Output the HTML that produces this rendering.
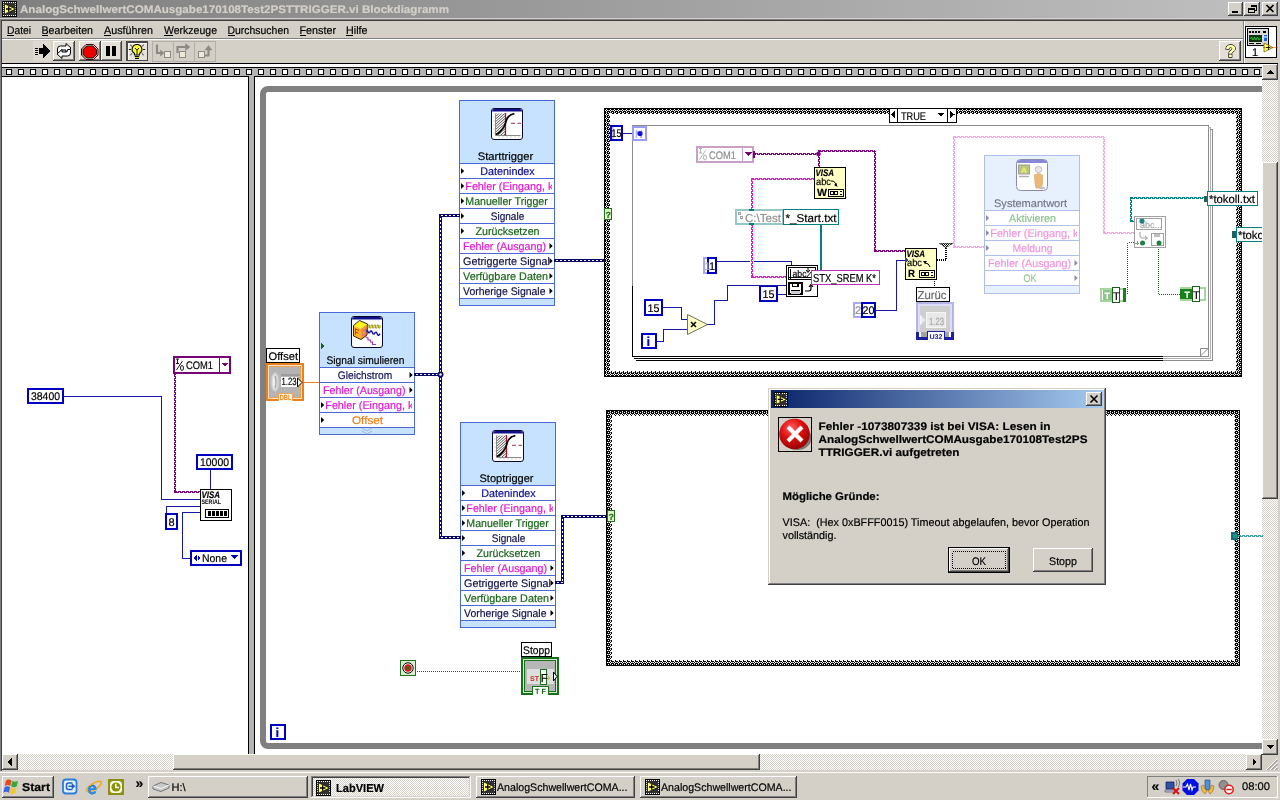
<!DOCTYPE html>
<html><head><meta charset="utf-8"><title>LabVIEW</title>
<style>html,body{margin:0;padding:0;background:#d4d0c8;overflow:hidden}
svg{display:block;will-change:transform;font-family:"Liberation Sans",sans-serif;font-size:11px}
svg text{white-space:pre}
</style></head><body>
<svg width="1280" height="800" viewBox="0 0 1280 800" shape-rendering="crispEdges" text-rendering="geometricPrecision">
<defs><linearGradient id="tg" x1="0" x2="1" y1="0" y2="0"><stop offset="0" stop-color="#7f7f7f"/><stop offset="1" stop-color="#c0c0c0"/></linearGradient><linearGradient id="dg" x1="0" x2="1" y1="0" y2="0"><stop offset="0" stop-color="#0a246a"/><stop offset="1" stop-color="#a6caf0"/></linearGradient><pattern id="dith" width="2" height="2" patternUnits="userSpaceOnUse"><rect width="2" height="2" fill="#fff"/><rect width="1" height="1" fill="#d4d0c8"/><rect x="1" y="1" width="1" height="1" fill="#d4d0c8"/></pattern><pattern id="chk" width="2" height="2" patternUnits="userSpaceOnUse"><rect width="2" height="2" fill="#fff"/><rect width="1" height="1" fill="#000"/><rect x="1" y="1" width="1" height="1" fill="#000"/></pattern><pattern id="rul" x="0" y="69" width="12" height="6" patternUnits="userSpaceOnUse"><rect x="6" y="0" width="6" height="6" fill="#000"/><rect x="7" y="1" width="4" height="4" fill="#fff"/></pattern><pattern id="ring" width="4" height="4" patternUnits="userSpaceOnUse"><rect width="4" height="4" fill="#000"/><rect x="2" y="1" width="1" height="1" fill="#fff"/><rect x="1" y="2" width="1" height="1" fill="#fff"/><rect x="3" y="2" width="1" height="1" fill="#fff"/><rect x="2" y="3" width="1" height="1" fill="#fff"/><rect x="0" y="0" width="1" height="1" fill="#fff"/><rect x="0" y="2" width="1" height="1" fill="#fff" opacity="0.5"/><rect x="2" y="0" width="1" height="1" fill="#fff" opacity="0.5"/></pattern></defs>
<rect x="0" y="0" width="1280" height="800" fill="#d4d0c8" />
<rect x="0" y="0" width="1280" height="18" fill="url(#tg)" />
<g transform="translate(2,1) scale(1)">
<rect x="0" y="0" width="15" height="16" fill="#000" />
<rect x="1" y="1" width="13" height="14" fill="#303030" />
<rect x="1" y="1" width="1" height="1" fill="#fff" />
<rect x="1" y="14" width="1" height="1" fill="#fff" />
<rect x="3" y="1" width="1" height="1" fill="#fff" />
<rect x="3" y="14" width="1" height="1" fill="#fff" />
<rect x="5" y="1" width="1" height="1" fill="#fff" />
<rect x="5" y="14" width="1" height="1" fill="#fff" />
<rect x="7" y="1" width="1" height="1" fill="#fff" />
<rect x="7" y="14" width="1" height="1" fill="#fff" />
<rect x="9" y="1" width="1" height="1" fill="#fff" />
<rect x="9" y="14" width="1" height="1" fill="#fff" />
<rect x="11" y="1" width="1" height="1" fill="#fff" />
<rect x="11" y="14" width="1" height="1" fill="#fff" />
<rect x="13" y="1" width="1" height="1" fill="#fff" />
<rect x="13" y="14" width="1" height="1" fill="#fff" />
<rect x="1" y="3" width="1" height="1" fill="#d8d8ff" />
<rect x="13" y="3" width="1" height="1" fill="#d8d8ff" />
<rect x="1" y="5" width="1" height="1" fill="#d8d8ff" />
<rect x="13" y="5" width="1" height="1" fill="#d8d8ff" />
<rect x="1" y="7" width="1" height="1" fill="#d8d8ff" />
<rect x="13" y="7" width="1" height="1" fill="#d8d8ff" />
<rect x="1" y="9" width="1" height="1" fill="#d8d8ff" />
<rect x="13" y="9" width="1" height="1" fill="#d8d8ff" />
<rect x="1" y="11" width="1" height="1" fill="#d8d8ff" />
<rect x="13" y="11" width="1" height="1" fill="#d8d8ff" />
<path d="M2.5 2.8 L13.6 8 L2.5 13.200z" fill="#ffff70" stroke="#000" stroke-width="0.7" shape-rendering="geometricPrecision"/>
<path d="M4 8h5.500M6.700 5.300v5.400" fill="none" stroke="#000" stroke-width="1.3" shape-rendering="geometricPrecision"/>
</g>
<text x="20" y="13" fill="#d4d0c8" font-size="11" font-weight="bold" textLength="429" lengthAdjust="spacingAndGlyphs" stroke="#d4d0c8" stroke-width="0.18" >AnalogSchwellwertCOMAusgabe170108Test2PSTTRIGGER.vi Blockdiagramm</text>
<rect x="1228" y="2" width="15" height="14" fill="#404040" />
<rect x="1228" y="2" width="14" height="13" fill="#fff" />
<rect x="1229" y="3" width="13" height="12" fill="#808080" />
<rect x="1229" y="3" width="12" height="11" fill="#d4d0c8" />
<rect x="1244" y="2" width="16" height="14" fill="#404040" />
<rect x="1244" y="2" width="15" height="13" fill="#fff" />
<rect x="1245" y="3" width="14" height="12" fill="#808080" />
<rect x="1245" y="3" width="13" height="11" fill="#d4d0c8" />
<rect x="1262" y="2" width="16" height="14" fill="#404040" />
<rect x="1262" y="2" width="15" height="13" fill="#fff" />
<rect x="1263" y="3" width="14" height="12" fill="#808080" />
<rect x="1263" y="3" width="13" height="11" fill="#d4d0c8" />
<rect x="1232" y="11" width="6" height="2" fill="#000" />
<path d="M1250.5 5.5h6v5h-2 M1250.5 6.5h6" fill="none" stroke="#000" stroke-width="1" />
<path d="M1248.5 8.5h6v4h-6z M1248.5 9.5h6" fill="none" stroke="#000" stroke-width="1" />
<path d="M1266.5 5 l7 7 M1273.5 5 l-7 7" fill="none" stroke="#000" stroke-width="1.6" shape-rendering="geometricPrecision"/>
<rect x="0" y="19" width="1280" height="1" fill="#808080" />
<rect x="0" y="20" width="1280" height="1" fill="#404040" />
<rect x="0" y="19" width="1" height="752" fill="#808080" />
<rect x="1" y="20" width="1" height="751" fill="#404040" />
<text x="7" y="34" fill="#000" font-size="11" textLength="24" lengthAdjust="spacingAndGlyphs" stroke="#000" stroke-width="0.18" >Datei</text>
<rect x="7" y="35" width="7" height="1" fill="#000" />
<text x="41.5" y="34" fill="#000" font-size="11" textLength="51.5" lengthAdjust="spacingAndGlyphs" stroke="#000" stroke-width="0.18" >Bearbeiten</text>
<rect x="42" y="35" width="6" height="1" fill="#000" />
<text x="104" y="34" fill="#000" font-size="11" textLength="49" lengthAdjust="spacingAndGlyphs" stroke="#000" stroke-width="0.18" >Ausführen</text>
<rect x="104" y="35" width="7" height="1" fill="#000" />
<text x="164" y="34" fill="#000" font-size="11" textLength="53" lengthAdjust="spacingAndGlyphs" stroke="#000" stroke-width="0.18" >Werkzeuge</text>
<rect x="164" y="35" width="9" height="1" fill="#000" />
<text x="227.5" y="34" fill="#000" font-size="11" textLength="61.5" lengthAdjust="spacingAndGlyphs" stroke="#000" stroke-width="0.18" >Durchsuchen</text>
<rect x="228" y="35" width="7" height="1" fill="#000" />
<text x="299.5" y="34" fill="#000" font-size="11" textLength="36.5" lengthAdjust="spacingAndGlyphs" stroke="#000" stroke-width="0.18" >Fenster</text>
<rect x="300" y="35" width="6" height="1" fill="#000" />
<text x="346" y="34" fill="#000" font-size="11" textLength="21.5" lengthAdjust="spacingAndGlyphs" stroke="#000" stroke-width="0.18" >Hilfe</text>
<rect x="346" y="35" width="7" height="1" fill="#000" />
<rect x="2" y="38" width="1241" height="1" fill="#808080" />
<rect x="2" y="39" width="1241" height="1" fill="#fff" />
<rect x="1243" y="21" width="1" height="42" fill="#808080" />
<rect x="1244" y="21" width="1" height="42" fill="#fff" />
<rect x="33" y="41" width="18" height="20" fill="#dedad2" />
<path d="M43 44 l7 7 l-7 7 v-4 h-4 v-6 h4z" fill="#000" />
<rect x="35" y="48" width="3" height="1" fill="#000" />
<rect x="35" y="50" width="3" height="1" fill="#000" />
<rect x="35" y="52" width="3" height="1" fill="#000" />
<rect x="35" y="54" width="3" height="1" fill="#000" />
<rect x="53" y="41" width="22" height="20" fill="#404040" />
<rect x="53" y="41" width="21" height="19" fill="#fff" />
<rect x="54" y="42" width="20" height="18" fill="#808080" />
<rect x="54" y="42" width="19" height="17" fill="#e4e0d8" />
<path d="M57.5 52.5 v-3.5 q0 -3 3 -3 h5.500 v-2.500 l5 4.5 l-5 4.5 v-2.500 h-4 q-1.500 0 -1.500 1.500 v1z" fill="#fff" stroke="#000" stroke-width="1" shape-rendering="geometricPrecision"/>
<path d="M70.5 49.5 v3.5 q0 3 -3 3 h-5.500 v2.500 l-5 -4.5 l5 -4.5 v2.500 h4 q1.500 0 1.500 -1.500 v-1z" fill="#fff" stroke="#000" stroke-width="1" shape-rendering="geometricPrecision"/>
<rect x="79" y="41" width="22" height="20" fill="#404040" />
<rect x="79" y="41" width="21" height="19" fill="#fff" />
<rect x="80" y="42" width="20" height="18" fill="#808080" />
<rect x="80" y="42" width="19" height="17" fill="#e4e0d8" />
<path d="M86 44.5 h7.5 l4.5 4.5 v6 l-4.5 4.5 h-7.5 l-4.5 -4.5 v-6 z" fill="#d4d0c8" stroke="#400000" stroke-width="1" shape-rendering="geometricPrecision"/>
<path d="M86.6 46 h6.3 l3.6 3.6 v4.8 l-3.6 3.6 h-6.3 l-3.6 -3.6 v-4.8 z" fill="#ee0000" stroke="#000" stroke-width="0.8" shape-rendering="geometricPrecision"/>
<rect x="101" y="41" width="21" height="20" fill="#404040" />
<rect x="101" y="41" width="20" height="19" fill="#fff" />
<rect x="102" y="42" width="19" height="18" fill="#808080" />
<rect x="102" y="42" width="18" height="17" fill="#e4e0d8" />
<rect x="106" y="46" width="4" height="10" fill="#000" />
<rect x="112" y="46" width="4" height="10" fill="#000" />
<rect x="126" y="41" width="22" height="20" fill="#484848" />
<rect x="128" y="43" width="19" height="17" fill="#fff" />
<rect x="129" y="44" width="18" height="16" fill="#e6e3dc" />
<g shape-rendering="geometricPrecision">
<path d="M137 44.5 a4.8 4.8 0 0 1 2.700 8.800 l-.3 1.700 h-4.800 l-.3 -1.700 a4.800 4.800 0 0 1 2.700 -8.800z" fill="#ffff30" stroke="#000" stroke-width="1.1" />
<path d="M135 48 l2 2.200 l2 -2.200 M137 50.200 v4.500" fill="none" stroke="#000" stroke-width="0.9" />
<path d="M134.8 56.5 h4.400 M135 58.300 h4" fill="none" stroke="#000" stroke-width="1.2" />
<path d="M135.2 57.4 h3.600" fill="none" stroke="#e8e000" stroke-width="0.8" />
<path d="M130.2 44.8 l1.800 1.600 M143.800 44.800 l-1.800 1.600 M128.800 49.500 h2.200 M143 49.500 h2.200 M130.300 55 l1.800 -1.500 M143.700 55 l-1.800 -1.500" fill="none" stroke="#202020" stroke-width="1" />
</g>
<rect x="152" y="41" width="64" height="21" fill="#b4b0a8" />
<rect x="153" y="42" width="20" height="19" fill="#d3cfc7" />
<rect x="174" y="42" width="20" height="19" fill="#d3cfc7" />
<rect x="195" y="42" width="20" height="19" fill="#d3cfc7" />
<g shape-rendering="geometricPrecision" fill="none" stroke="#8c8a82" stroke-width="2.2">
<path d="M157 44.5 v8.500 h4.500" fill="none" />
<path d="M160.5 50 l3.500 3 l-3.500 3z" fill="#8c8a82" stroke="#8c8a82" stroke-width="0.5" />
<path d="M177.5 53 v-6 h9" fill="none" />
<path d="M185.500 43.500 l4.500 3.500 l-4.500 3.500z" fill="#8c8a82" stroke="#8c8a82" stroke-width="0.5" />
<path d="M204 55.5 h4.500 v-6" fill="none" />
<path d="M205 50 l3.500 -4.500 l3.500 4.500z" fill="#8c8a82" stroke="#8c8a82" stroke-width="0.5" />
</g>
<rect x="164" y="51" width="7" height="7" fill="#8c8a82" />
<rect x="165" y="52" width="5" height="5" fill="#ecead8" />
<rect x="179" y="51" width="7" height="7" fill="#8c8a82" />
<rect x="180" y="52" width="5" height="5" fill="#ecead8" />
<rect x="198" y="51" width="7" height="7" fill="#8c8a82" />
<rect x="199" y="52" width="5" height="5" fill="#ecead8" />
<rect x="1219" y="41" width="22" height="20" fill="#404040" />
<rect x="1219" y="41" width="21" height="19" fill="#fff" />
<rect x="1220" y="42" width="20" height="18" fill="#808080" />
<rect x="1220" y="42" width="19" height="17" fill="#e4e0d8" />
<text x="1225.5" y="57" fill="#fff" font-size="17" font-weight="bold" stroke="#000" stroke-width="1.6" paint-order="stroke" shape-rendering="geometricPrecision">?</text>
<text x="1225.5" y="57" fill="#ffffa0" font-size="17" font-weight="bold" stroke="#ffffa0" stroke-width="0.18" >?</text>
<rect x="1245" y="26" width="32" height="32" fill="#000" />
<rect x="1246" y="27" width="30" height="30" fill="#fff" />
<rect x="1247" y="28" width="22" height="18" fill="#000" />
<rect x="1248" y="29" width="20" height="16" fill="#d8d8d8" />
<rect x="1249" y="35" width="13" height="7" fill="#103010" />
<path d="M1250 39 l1.5 -2 l1.5 3 l1.5 -3 l1.5 3 l1.5 -3 l1.5 3 l1.5 -2" fill="none" stroke="#30e030" stroke-width="0.8" shape-rendering="geometricPrecision"/>
<rect x="1249" y="31" width="2" height="2" fill="#000" />
<rect x="1252" y="31" width="2" height="2" fill="#000" />
<rect x="1255" y="31" width="2" height="2" fill="#000" />
<rect x="1258" y="31" width="2" height="2" fill="#000" />
<rect x="1263" y="31" width="3" height="2" fill="#000" />
<rect x="1264" y="35" width="3" height="6" fill="#2060e0" />
<rect x="1264" y="36" width="3" height="2" fill="#80c0ff" />
<rect x="1249" y="43" width="5" height="1" fill="#000" />
<rect x="1256" y="43" width="5" height="1" fill="#000" />
<text x="1252" y="55.5" fill="#000" font-size="11" stroke="#000" stroke-width="0.18" >1</text>
<path d="M1264 43 l9 4.5 l-9 4.5z" fill="#ffff50" stroke="#806000" stroke-width="0.8" shape-rendering="geometricPrecision"/>
<rect x="1263" y="47" width="15" height="1" fill="#c04000" opacity="0.5"/>
<path d="M1266 47.5h4M1268 45.5v4" fill="none" stroke="#000" stroke-width="0.8" />
<rect x="2" y="63" width="1276" height="1" fill="#000" />
<rect x="2" y="64" width="1260" height="3" fill="#fff" />
<rect x="2" y="67" width="1260" height="1" fill="#000" />
<rect x="2" y="68" width="1260" height="8" fill="#b4b4b4" />
<rect x="2" y="69" width="1260" height="6" fill="url(#rul)" />
<rect x="2" y="76" width="1260" height="1" fill="#000" />
<rect x="2" y="77" width="246" height="677" fill="#fff" />
<rect x="248" y="77" width="1" height="677" fill="#000" />
<rect x="249" y="76" width="5" height="678" fill="#b4b4b4" />
<rect x="254" y="77" width="1" height="677" fill="#000" />
<rect x="255" y="77" width="1007" height="677" fill="#fff" />
<rect x="1262" y="64" width="16" height="691" fill="url(#dith)" />
<rect x="1278" y="64" width="2" height="707" fill="#d4d0c8" />
<rect x="1262" y="64" width="16" height="16" fill="#404040" />
<rect x="1262" y="64" width="15" height="15" fill="#fff" />
<rect x="1263" y="65" width="14" height="14" fill="#808080" />
<rect x="1263" y="65" width="13" height="13" fill="#d4d0c8" />
<path d="M1266 74 h8 l-4 -4z" fill="#000" />
<rect x="1262" y="162" width="16" height="337" fill="#404040" />
<rect x="1262" y="162" width="15" height="336" fill="#fff" />
<rect x="1263" y="163" width="14" height="335" fill="#808080" />
<rect x="1263" y="163" width="13" height="334" fill="#d4d0c8" />
<rect x="1262" y="739" width="16" height="16" fill="#404040" />
<rect x="1262" y="739" width="15" height="15" fill="#fff" />
<rect x="1263" y="740" width="14" height="14" fill="#808080" />
<rect x="1263" y="740" width="13" height="13" fill="#d4d0c8" />
<path d="M1266 745 h8 l-4 4z" fill="#000" />
<rect x="2" y="754" width="1260" height="16" fill="url(#dith)" />
<rect x="2" y="754" width="16" height="16" fill="#404040" />
<rect x="2" y="754" width="15" height="15" fill="#fff" />
<rect x="3" y="755" width="14" height="14" fill="#808080" />
<rect x="3" y="755" width="13" height="13" fill="#d4d0c8" />
<path d="M11.5 758 v8 l-4 -4z" fill="#000" />
<rect x="173" y="754" width="587" height="16" fill="#404040" />
<rect x="173" y="754" width="586" height="15" fill="#fff" />
<rect x="174" y="755" width="585" height="14" fill="#808080" />
<rect x="174" y="755" width="584" height="13" fill="#d4d0c8" />
<rect x="1246" y="754" width="16" height="16" fill="#404040" />
<rect x="1246" y="754" width="15" height="15" fill="#fff" />
<rect x="1247" y="755" width="14" height="14" fill="#808080" />
<rect x="1247" y="755" width="13" height="13" fill="#d4d0c8" />
<path d="M1252.5 758 v8 l4 -4z" fill="#000" />
<rect x="1262" y="755" width="16" height="16" fill="#d4d0c8" />
<g shape-rendering="geometricPrecision" stroke-width="1.3">
<path d="M1277.5 758.5 L1266 770" fill="none" stroke="#fff" stroke-width="1" />
<path d="M1277.5 759.9 L1267.4 770" fill="none" stroke="#808080" stroke-width="1" />
<path d="M1277.5 762.5 L1270 770" fill="none" stroke="#fff" stroke-width="1" />
<path d="M1277.5 763.9 L1271.4 770" fill="none" stroke="#808080" stroke-width="1" />
<path d="M1277.5 766.5 L1274 770" fill="none" stroke="#fff" stroke-width="1" />
<path d="M1277.5 767.9 L1275.4 770" fill="none" stroke="#808080" stroke-width="1" />
</g>
<clipPath id="cvs"><rect x="255" y="77" width="1007" height="676"/></clipPath>
<rect x="263" y="89" width="1100" height="657" rx="5" ry="5" fill="none" stroke="#808080" stroke-width="6" shape-rendering="geometricPrecision" clip-path="url(#cvs)"/>
<rect x="270" y="724" width="16" height="16" fill="#0000c0" />
<rect x="272" y="726" width="12" height="12" fill="#fff" />
<text x="275.5" y="736.5" fill="#0000c0" font-size="13" font-weight="bold" stroke="#0000c0" stroke-width="0.18" >i</text>
<clipPath id="hclip"><rect x="4.8" y="5.5" width="9.2" height="21.5"/></clipPath>
<rect x="27" y="388" width="37" height="16" fill="#0000c0" />
<rect x="29" y="390" width="33" height="12" fill="#fff" />
<text x="31" y="400" fill="#000" font-size="11" textLength="29" lengthAdjust="spacingAndGlyphs" stroke="#000" stroke-width="0.18" >38400</text>
<polyline points="64.5,396.5 161.5,396.5 161.5,499.5 200.5,499.5" fill="none" stroke="#1818a8" stroke-width="1" stroke-linecap="square" />
<rect x="173" y="356" width="58" height="18" fill="#780078" />
<rect x="175" y="358" width="54" height="14" fill="#fff" />
<rect x="219" y="358" width="1" height="14" fill="#780078" />
<g shape-rendering="geometricPrecision" stroke="#000" fill="none" stroke-width="0.9">
<path d="M176 359 h3 M177.5 359 v4.5 M176 363.5 h3" fill="none" />
<path d="M176.5 370 l6 -9" fill="none" />
<ellipse cx="182" cy="368" rx="1.5" ry="2.5"/>
</g>
<text x="186" y="369" fill="#000" font-size="11" textLength="27" lengthAdjust="spacingAndGlyphs" stroke="#000" stroke-width="0.18" >COM1</text>
<path d="M221.5 363 h7 l-3.5 4z" fill="#780078" />
<line x1="174.5" y1="374" x2="174.5" y2="493" stroke="#780078" stroke-width="1" stroke-dasharray="3 1"/>
<line x1="175.5" y1="374" x2="175.5" y2="493" stroke="#780078" stroke-width="1" stroke-dasharray="3 1" stroke-dashoffset="2"/>
<line x1="174" y1="491.5" x2="201" y2="491.5" stroke="#780078" stroke-width="1" stroke-dasharray="3 1"/>
<line x1="174" y1="492.5" x2="201" y2="492.5" stroke="#780078" stroke-width="1" stroke-dasharray="3 1" stroke-dashoffset="2"/>
<rect x="196" y="454" width="37" height="16" fill="#0000c0" />
<rect x="198" y="456" width="33" height="12" fill="#fff" />
<text x="200" y="466" fill="#000" font-size="11" textLength="29" lengthAdjust="spacingAndGlyphs" stroke="#000" stroke-width="0.18" >10000</text>
<polyline points="210.5,470.5 210.5,489.5" fill="none" stroke="#1818a8" stroke-width="1" stroke-linecap="square" />
<rect x="165" y="513" width="13" height="17" fill="#0000c0" />
<rect x="167" y="515" width="9" height="13" fill="#fff" />
<text x="168.5" y="525.5" fill="#000" font-size="11" stroke="#000" stroke-width="0.18" >8</text>
<polyline points="166.5,513.5 166.5,506.5 200.5,506.5" fill="none" stroke="#1818a8" stroke-width="1" stroke-linecap="square" />
<rect x="190" y="550" width="52" height="16" fill="#0000c0" />
<rect x="192" y="552" width="48" height="12" fill="#fff" />
<path d="M193.5 558 l3 -3 v6z M200.5 558 l-3 -3 v6z" fill="#0000c0" />
<text x="202" y="562" fill="#000" font-size="11" textLength="25" lengthAdjust="spacingAndGlyphs" stroke="#000" stroke-width="0.18" >None</text>
<path d="M231 555 h7 l-3.5 4z" fill="#0000c0" />
<polyline points="190.5,558.5 182.5,558.5 182.5,512.5 200.5,512.5" fill="none" stroke="#1818a8" stroke-width="1" stroke-linecap="square" />
<rect x="200" y="489" width="32" height="32" fill="#000" />
<rect x="201" y="490" width="30" height="30" fill="#fff" />
<text x="201.5" y="497.8" fill="#000" font-size="9.5" font-weight="bold" textLength="18.5" lengthAdjust="spacingAndGlyphs" stroke="#000" stroke-width="0.18" font-style="italic">VISA</text>
<text x="201.5" y="504" fill="#000" font-size="6.5" font-weight="bold" textLength="19.5" lengthAdjust="spacingAndGlyphs" >SERIAL</text>
<rect x="205" y="509" width="24" height="9" fill="#000" />
<rect x="206" y="510" width="22" height="7" fill="#fff" />
<rect x="208" y="511" width="3" height="5" fill="#000" />
<rect x="212" y="511" width="3" height="5" fill="#000" />
<rect x="216" y="511" width="3" height="5" fill="#000" />
<rect x="220" y="511" width="3" height="5" fill="#000" />
<rect x="224" y="511" width="3" height="5" fill="#000" />
<rect x="266" y="348" width="34" height="15" fill="#000" />
<rect x="267" y="349" width="32" height="13" fill="#fff" />
<text x="268.5" y="360" fill="#000" font-size="11" textLength="29.5" lengthAdjust="spacingAndGlyphs" stroke="#000" stroke-width="0.18" >Offset</text>
<rect x="266" y="363" width="38" height="38" fill="#e8801c" />
<rect x="268" y="365" width="34" height="34" fill="#b4b4b4" />
<rect x="268" y="365" width="34" height="34" fill="#fbe2c4" />
<rect x="269" y="366" width="32" height="32" fill="#b4b4b4" />
<rect x="269" y="366" width="32" height="32" fill="#f0a050" />
<rect x="270" y="367" width="30" height="30" fill="#b4b4b4" />
<g shape-rendering="geometricPrecision">
<ellipse cx="275" cy="382" rx="4" ry="9.5" fill="#d6d6d6" stroke="#c4c4c4" stroke-width="1"/>
<ellipse cx="274.500" cy="382" rx="2" ry="7" fill="#ececec"/>
<path d="M275 376 q2 6 0 12" fill="none" stroke="#a0a0a0" stroke-width="1.2" />
</g>
<rect x="281" y="374" width="19" height="2" fill="#9c9c9c" />
<rect x="281" y="377" width="16" height="10" fill="#fff" />
<text x="281.5" y="385.3" fill="#000" font-size="10.5" textLength="15" lengthAdjust="spacingAndGlyphs" stroke="#000" stroke-width="0.18" >1.23</text>
<path d="M297.5 378 l4.500 4.500 l-4.500 4.500 z" fill="#fff" stroke="#000" stroke-width="1" shape-rendering="geometricPrecision"/>
<rect x="278" y="393" width="15" height="8" fill="#f0a050" />
<rect x="279" y="394" width="13" height="6" fill="#fffaf0" />
<rect x="279" y="399" width="13" height="2" fill="#fffaf0" />
<text x="279.8" y="400" fill="#e8801c" font-size="7.5" font-weight="bold" textLength="11.5" lengthAdjust="spacingAndGlyphs" >DBL</text>
<polyline points="304.5,382.5 319.5,382.5" fill="none" stroke="#e8801c" stroke-width="1" stroke-linecap="square" />
<rect x="319" y="312" width="96" height="123" fill="#4a68d8" />
<rect x="320" y="313" width="94" height="121" fill="#c6e2fe" />
<rect x="320" y="368" width="94" height="59" fill="#fff" />
<rect x="319" y="367" width="96" height="1" fill="#4a68d8" />
<rect x="319" y="382" width="96" height="1" fill="#4a68d8" />
<rect x="319" y="397" width="96" height="1" fill="#4a68d8" />
<rect x="319" y="412" width="96" height="1" fill="#4a68d8" />
<rect x="319" y="427" width="96" height="1" fill="#4a68d8" />
<text x="365.5" y="363.6" fill="#000" font-size="11" textLength="78" lengthAdjust="spacingAndGlyphs" text-anchor="middle" stroke="#000" stroke-width="0.18" >Signal simulieren</text>
<clipPath id="cs"><rect x="320" y="312" width="92" height="123"/></clipPath>
<clipPath id="cso"><rect x="320" y="312" width="89.5" height="123"/></clipPath>
<text x="365.0" y="379" fill="#10105a" font-size="11" textLength="54.5" lengthAdjust="spacingAndGlyphs" text-anchor="middle" stroke="#10105a" stroke-width="0.18" >Gleichstrom</text>
<text x="323" y="394" fill="#e018d0" font-size="11" textLength="82.5" lengthAdjust="spacingAndGlyphs" stroke="#e018d0" stroke-width="0.18" clip-path="url(#cso)">Fehler (Ausgang)</text>
<text x="325.3" y="409" fill="#e018d0" font-size="11" textLength="139.5" lengthAdjust="spacingAndGlyphs" stroke="#e018d0" stroke-width="0.18" clip-path="url(#cs)">Fehler (Eingang, kein Fehler)</text>
<text x="367.5" y="424" fill="#e8801c" font-size="11" textLength="31" lengthAdjust="spacingAndGlyphs" text-anchor="middle" stroke="#e8801c" stroke-width="0.18" >Offset</text>
<path d="M409.5 372 l3.2 3 l-3.2 3z" fill="#000" shape-rendering="geometricPrecision"/>
<path d="M409.5 387 l3.2 3 l-3.2 3z" fill="#000" shape-rendering="geometricPrecision"/>
<path d="M321 402 l3.2 3 l-3.2 3z" fill="#000" shape-rendering="geometricPrecision"/>
<path d="M321 417 l3.2 3 l-3.2 3z" fill="#000" shape-rendering="geometricPrecision"/>
<g transform="translate(351,316)" shape-rendering="geometricPrecision">
<rect x="0.5" y="0.5" width="31" height="31" rx="2.5" fill="#fff" stroke="#08082c" stroke-width="1"/>
<path d="M1 3.5 q0 -2.500 3 -2.500 h24 q3 0 3 2.500 z" fill="#10108a" />
<path d="M2.5 9.5 L10 12.500 V23.500 L2.500 20z" fill="#ffb428" />
<path d="M10 12.5 L16.500 8 L16 19 L10 23.500z" fill="#f09838" />
<path d="M8.5 4.5 L16.500 8 L10 12.500 L2.500 9.500z" fill="#fff418" />
<path d="M8.5 4.5 L16.500 8 L16 19 L10 23.500 L2.500 20 V9.500z" fill="none" stroke="#201000" stroke-width="0.9" />
<path d="M4.5 12.5 v6 M4.500 13 l3.500 1.500 M4.500 16 l3 1.200" fill="none" stroke="#d03010" stroke-width="1" />
<path d="M11 16 q2 -3 4 -1 M11 19 q2 1 4 -2" fill="none" stroke="#f06090" stroke-width="1.2" />
<path d="M14.5 12.5 l1.500 2 v3z" fill="#1018c0" />
<path d="M17 12 v-3 h1.500 v3 h1.500 v-3 h1.500 v3 h1.500 v-3 h1.500 v3 h1.500 v-3 h1.500 v3 h1.500 v-3" fill="none" stroke="#a0a018" stroke-width="1" />
<path d="M16.5 14.5 q1.200 4 2.600 1.200 q1.200 -2 2.400 1.200 q1.200 2.500 2.400 0 q1.200 -2 2.400 1.200 q1.200 2.500 2.700 -.5" fill="none" stroke="#1010a0" stroke-width="1.4" />
<path d="M14 20.5 l3 1.500 v2 h2.500 v2 h2 v2.500 h3.500" fill="none" stroke="#a038a0" stroke-width="1.2" />
</g>
<path d="M321 343 l3 3 l-3 3z" fill="#186418" />
<path d="M362 428 l5 3 l5 -3 M362 431 l5 3 l5 -3" fill="none" stroke="#9cb4e4" stroke-width="1" shape-rendering="geometricPrecision"/>
<rect x="459" y="100" width="96" height="206" fill="#4a68d8" />
<rect x="460" y="101" width="94" height="204" fill="#c6e2fe" />
<rect x="460" y="164" width="94" height="134" fill="#fff" />
<rect x="459" y="163" width="96" height="1" fill="#4a68d8" />
<rect x="459" y="178" width="96" height="1" fill="#4a68d8" />
<rect x="459" y="193" width="96" height="1" fill="#4a68d8" />
<rect x="459" y="208" width="96" height="1" fill="#4a68d8" />
<rect x="459" y="223" width="96" height="1" fill="#4a68d8" />
<rect x="459" y="238" width="96" height="1" fill="#4a68d8" />
<rect x="459" y="253" width="96" height="1" fill="#4a68d8" />
<rect x="459" y="268" width="96" height="1" fill="#4a68d8" />
<rect x="459" y="283" width="96" height="1" fill="#4a68d8" />
<rect x="459" y="298" width="96" height="1" fill="#4a68d8" />
<text x="505.5" y="159.6" fill="#000" font-size="11" textLength="55.5" lengthAdjust="spacingAndGlyphs" text-anchor="middle" stroke="#000" stroke-width="0.18" >Starttrigger</text>
<clipPath id="ct1"><rect x="460" y="100" width="92" height="206"/></clipPath>
<clipPath id="ct1o"><rect x="460" y="100" width="89.5" height="206"/></clipPath>
<text x="507.5" y="175" fill="#0c0c90" font-size="11" textLength="54.5" lengthAdjust="spacingAndGlyphs" text-anchor="middle" stroke="#0c0c90" stroke-width="0.18" >Datenindex</text>
<text x="465.3" y="190" fill="#e018d0" font-size="11" textLength="139.5" lengthAdjust="spacingAndGlyphs" stroke="#e018d0" stroke-width="0.18" clip-path="url(#ct1)">Fehler (Eingang, kein Fehler)</text>
<text x="465.3" y="205" fill="#186418" font-size="11" textLength="82.5" lengthAdjust="spacingAndGlyphs" stroke="#186418" stroke-width="0.18" clip-path="url(#ct1)">Manueller Trigger</text>
<text x="507.5" y="220" fill="#10104a" font-size="11" textLength="33.5" lengthAdjust="spacingAndGlyphs" text-anchor="middle" stroke="#10104a" stroke-width="0.18" >Signale</text>
<text x="507.5" y="235" fill="#186418" font-size="11" textLength="64" lengthAdjust="spacingAndGlyphs" text-anchor="middle" stroke="#186418" stroke-width="0.18" >Zurücksetzen</text>
<text x="463" y="250" fill="#e018d0" font-size="11" textLength="83" lengthAdjust="spacingAndGlyphs" stroke="#e018d0" stroke-width="0.18" clip-path="url(#ct1o)">Fehler (Ausgang)</text>
<text x="463" y="265" fill="#10104a" font-size="11" textLength="93" lengthAdjust="spacingAndGlyphs" stroke="#10104a" stroke-width="0.18" clip-path="url(#ct1o)">Getriggerte Signale</text>
<text x="463" y="280" fill="#186418" font-size="11" textLength="85" lengthAdjust="spacingAndGlyphs" stroke="#186418" stroke-width="0.18" clip-path="url(#ct1o)">Verfügbare Daten</text>
<text x="463" y="295" fill="#10104a" font-size="11" textLength="82.5" lengthAdjust="spacingAndGlyphs" stroke="#10104a" stroke-width="0.18" clip-path="url(#ct1o)">Vorherige Signale</text>
<path d="M461 168 l3.2 3 l-3.2 3z" fill="#000" shape-rendering="geometricPrecision"/>
<path d="M461 183 l3.2 3 l-3.2 3z" fill="#000" shape-rendering="geometricPrecision"/>
<path d="M461 198 l3.2 3 l-3.2 3z" fill="#000" shape-rendering="geometricPrecision"/>
<path d="M461 213 l3.2 3 l-3.2 3z" fill="#000" shape-rendering="geometricPrecision"/>
<path d="M461 228 l3.2 3 l-3.2 3z" fill="#000" shape-rendering="geometricPrecision"/>
<path d="M549.5 243 l3.2 3 l-3.2 3z" fill="#000" shape-rendering="geometricPrecision"/>
<path d="M549.5 258 l3.2 3 l-3.2 3z" fill="#000" shape-rendering="geometricPrecision"/>
<path d="M549.5 273 l3.2 3 l-3.2 3z" fill="#000" shape-rendering="geometricPrecision"/>
<path d="M549.5 288 l3.2 3 l-3.2 3z" fill="#000" shape-rendering="geometricPrecision"/>
<g transform="translate(491,108)" shape-rendering="geometricPrecision">
<rect x="0.5" y="0.5" width="31" height="31" rx="2.5" fill="#fff" stroke="#08082c" stroke-width="1"/>
<path d="M1 3.5 q0 -2.500 2.500 -2.500 h25 q2.500 0 2.500 2.500 z" fill="#10108a" />
<rect x="4" y="5.500" width="10" height="21.500" fill="#fbfbfb"/>
<path d="M4 -1.4000000000000004 l10 -9" fill="none" stroke="#484848" stroke-width="0.9" clip-path="url(#hclip)"/>
<path d="M4 1.1999999999999993 l10 -9" fill="none" stroke="#484848" stroke-width="0.9" clip-path="url(#hclip)"/>
<path d="M4 3.8 l10 -9" fill="none" stroke="#484848" stroke-width="0.9" clip-path="url(#hclip)"/>
<path d="M4 6.4 l10 -9" fill="none" stroke="#484848" stroke-width="0.9" clip-path="url(#hclip)"/>
<path d="M4 9.0 l10 -9" fill="none" stroke="#484848" stroke-width="0.9" clip-path="url(#hclip)"/>
<path d="M4 11.6 l10 -9" fill="none" stroke="#484848" stroke-width="0.9" clip-path="url(#hclip)"/>
<path d="M4 14.2 l10 -9" fill="none" stroke="#484848" stroke-width="0.9" clip-path="url(#hclip)"/>
<path d="M4 16.8 l10 -9" fill="none" stroke="#484848" stroke-width="0.9" clip-path="url(#hclip)"/>
<path d="M4 19.4 l10 -9" fill="none" stroke="#484848" stroke-width="0.9" clip-path="url(#hclip)"/>
<path d="M4 22.0 l10 -9" fill="none" stroke="#484848" stroke-width="0.9" clip-path="url(#hclip)"/>
<path d="M4 24.6 l10 -9" fill="none" stroke="#484848" stroke-width="0.9" clip-path="url(#hclip)"/>
<path d="M4 27.2 l10 -9" fill="none" stroke="#484848" stroke-width="0.9" clip-path="url(#hclip)"/>
<path d="M4 29.8 l10 -9" fill="none" stroke="#484848" stroke-width="0.9" clip-path="url(#hclip)"/>
<path d="M4 32.400000000000006 l10 -9" fill="none" stroke="#484848" stroke-width="0.9" clip-path="url(#hclip)"/>
<path d="M4 35.0 l10 -9" fill="none" stroke="#484848" stroke-width="0.9" clip-path="url(#hclip)"/>
<path d="M4 37.6 l10 -9" fill="none" stroke="#484848" stroke-width="0.9" clip-path="url(#hclip)"/>
<path d="M4.5 5.5 v22 h25" fill="none" stroke="#8a8a8a" stroke-width="1" />
<path d="M8 28.500 v1 M12 28.500 v1 M16 28.500 v1 M20 28.500 v1 M24 28.500 v1 M28 28.500 v1 M3.500 9 h-1 M3.500 13 h-1 M3.500 17 h-1 M3.500 21 h-1 M3.500 25 h-1" fill="none" stroke="#9a9a9a" stroke-width="0.8" />
<path d="M14.5 5 v22.500" fill="none" stroke="#b01030" stroke-width="1.3" />
<path d="M20 15.300 h10" fill="none" stroke="#983050" stroke-width="1" stroke-dasharray="4 2.500"/>
<path d="M4.800 26.500 q4 -1.200 8 -7.500 q1.500 -2.500 2.500 -6.500 q1.500 -5.500 8 -6.800" fill="none" stroke="#000" stroke-width="1.7" />
</g>
<rect x="460" y="422" width="96" height="206" fill="#4a68d8" />
<rect x="461" y="423" width="94" height="204" fill="#c6e2fe" />
<rect x="461" y="486" width="94" height="134" fill="#fff" />
<rect x="460" y="485" width="96" height="1" fill="#4a68d8" />
<rect x="460" y="500" width="96" height="1" fill="#4a68d8" />
<rect x="460" y="515" width="96" height="1" fill="#4a68d8" />
<rect x="460" y="530" width="96" height="1" fill="#4a68d8" />
<rect x="460" y="545" width="96" height="1" fill="#4a68d8" />
<rect x="460" y="560" width="96" height="1" fill="#4a68d8" />
<rect x="460" y="575" width="96" height="1" fill="#4a68d8" />
<rect x="460" y="590" width="96" height="1" fill="#4a68d8" />
<rect x="460" y="605" width="96" height="1" fill="#4a68d8" />
<rect x="460" y="620" width="96" height="1" fill="#4a68d8" />
<text x="506.5" y="481.6" fill="#000" font-size="11" textLength="54" lengthAdjust="spacingAndGlyphs" text-anchor="middle" stroke="#000" stroke-width="0.18" >Stoptrigger</text>
<clipPath id="ct2"><rect x="461" y="422" width="92" height="206"/></clipPath>
<clipPath id="ct2o"><rect x="461" y="422" width="89.5" height="206"/></clipPath>
<text x="508.5" y="497" fill="#0c0c90" font-size="11" textLength="54.5" lengthAdjust="spacingAndGlyphs" text-anchor="middle" stroke="#0c0c90" stroke-width="0.18" >Datenindex</text>
<text x="466.3" y="512" fill="#e018d0" font-size="11" textLength="139.5" lengthAdjust="spacingAndGlyphs" stroke="#e018d0" stroke-width="0.18" clip-path="url(#ct2)">Fehler (Eingang, kein Fehler)</text>
<text x="466.3" y="527" fill="#186418" font-size="11" textLength="82.5" lengthAdjust="spacingAndGlyphs" stroke="#186418" stroke-width="0.18" clip-path="url(#ct2)">Manueller Trigger</text>
<text x="508.5" y="542" fill="#10104a" font-size="11" textLength="33.5" lengthAdjust="spacingAndGlyphs" text-anchor="middle" stroke="#10104a" stroke-width="0.18" >Signale</text>
<text x="508.5" y="557" fill="#186418" font-size="11" textLength="64" lengthAdjust="spacingAndGlyphs" text-anchor="middle" stroke="#186418" stroke-width="0.18" >Zurücksetzen</text>
<text x="464" y="572" fill="#e018d0" font-size="11" textLength="83" lengthAdjust="spacingAndGlyphs" stroke="#e018d0" stroke-width="0.18" clip-path="url(#ct2o)">Fehler (Ausgang)</text>
<text x="464" y="587" fill="#10104a" font-size="11" textLength="93" lengthAdjust="spacingAndGlyphs" stroke="#10104a" stroke-width="0.18" clip-path="url(#ct2o)">Getriggerte Signale</text>
<text x="464" y="602" fill="#186418" font-size="11" textLength="85" lengthAdjust="spacingAndGlyphs" stroke="#186418" stroke-width="0.18" clip-path="url(#ct2o)">Verfügbare Daten</text>
<text x="464" y="617" fill="#10104a" font-size="11" textLength="82.5" lengthAdjust="spacingAndGlyphs" stroke="#10104a" stroke-width="0.18" clip-path="url(#ct2o)">Vorherige Signale</text>
<path d="M462 490 l3.2 3 l-3.2 3z" fill="#000" shape-rendering="geometricPrecision"/>
<path d="M462 505 l3.2 3 l-3.2 3z" fill="#000" shape-rendering="geometricPrecision"/>
<path d="M462 520 l3.2 3 l-3.2 3z" fill="#000" shape-rendering="geometricPrecision"/>
<path d="M462 535 l3.2 3 l-3.2 3z" fill="#000" shape-rendering="geometricPrecision"/>
<path d="M462 550 l3.2 3 l-3.2 3z" fill="#000" shape-rendering="geometricPrecision"/>
<path d="M550.5 565 l3.2 3 l-3.2 3z" fill="#000" shape-rendering="geometricPrecision"/>
<path d="M550.5 580 l3.2 3 l-3.2 3z" fill="#000" shape-rendering="geometricPrecision"/>
<path d="M550.5 595 l3.2 3 l-3.2 3z" fill="#000" shape-rendering="geometricPrecision"/>
<path d="M550.5 610 l3.2 3 l-3.2 3z" fill="#000" shape-rendering="geometricPrecision"/>
<g transform="translate(492,430)" shape-rendering="geometricPrecision">
<rect x="0.5" y="0.5" width="31" height="31" rx="2.5" fill="#fff" stroke="#08082c" stroke-width="1"/>
<path d="M1 3.5 q0 -2.500 2.500 -2.500 h25 q2.500 0 2.500 2.500 z" fill="#10108a" />
<rect x="4" y="5.500" width="10" height="21.500" fill="#fbfbfb"/>
<path d="M4 -1.4000000000000004 l10 -9" fill="none" stroke="#484848" stroke-width="0.9" clip-path="url(#hclip)"/>
<path d="M4 1.1999999999999993 l10 -9" fill="none" stroke="#484848" stroke-width="0.9" clip-path="url(#hclip)"/>
<path d="M4 3.8 l10 -9" fill="none" stroke="#484848" stroke-width="0.9" clip-path="url(#hclip)"/>
<path d="M4 6.4 l10 -9" fill="none" stroke="#484848" stroke-width="0.9" clip-path="url(#hclip)"/>
<path d="M4 9.0 l10 -9" fill="none" stroke="#484848" stroke-width="0.9" clip-path="url(#hclip)"/>
<path d="M4 11.6 l10 -9" fill="none" stroke="#484848" stroke-width="0.9" clip-path="url(#hclip)"/>
<path d="M4 14.2 l10 -9" fill="none" stroke="#484848" stroke-width="0.9" clip-path="url(#hclip)"/>
<path d="M4 16.8 l10 -9" fill="none" stroke="#484848" stroke-width="0.9" clip-path="url(#hclip)"/>
<path d="M4 19.4 l10 -9" fill="none" stroke="#484848" stroke-width="0.9" clip-path="url(#hclip)"/>
<path d="M4 22.0 l10 -9" fill="none" stroke="#484848" stroke-width="0.9" clip-path="url(#hclip)"/>
<path d="M4 24.6 l10 -9" fill="none" stroke="#484848" stroke-width="0.9" clip-path="url(#hclip)"/>
<path d="M4 27.2 l10 -9" fill="none" stroke="#484848" stroke-width="0.9" clip-path="url(#hclip)"/>
<path d="M4 29.8 l10 -9" fill="none" stroke="#484848" stroke-width="0.9" clip-path="url(#hclip)"/>
<path d="M4 32.400000000000006 l10 -9" fill="none" stroke="#484848" stroke-width="0.9" clip-path="url(#hclip)"/>
<path d="M4 35.0 l10 -9" fill="none" stroke="#484848" stroke-width="0.9" clip-path="url(#hclip)"/>
<path d="M4 37.6 l10 -9" fill="none" stroke="#484848" stroke-width="0.9" clip-path="url(#hclip)"/>
<path d="M4.5 5.5 v22 h25" fill="none" stroke="#8a8a8a" stroke-width="1" />
<path d="M8 28.500 v1 M12 28.500 v1 M16 28.500 v1 M20 28.500 v1 M24 28.500 v1 M28 28.500 v1 M3.500 9 h-1 M3.500 13 h-1 M3.500 17 h-1 M3.500 21 h-1 M3.500 25 h-1" fill="none" stroke="#9a9a9a" stroke-width="0.8" />
<path d="M14.5 5 v22.500" fill="none" stroke="#b01030" stroke-width="1.3" />
<path d="M20 15.300 h10" fill="none" stroke="#983050" stroke-width="1" stroke-dasharray="4 2.500"/>
<path d="M4.800 26.500 q4 -1.200 8 -7.500 q1.500 -2.500 2.500 -6.500 q1.500 -5.500 8 -6.800" fill="none" stroke="#000" stroke-width="1.7" />
</g>
<polyline points="415.5,374.5 440.5,374.5" fill="none" stroke="#08086c" stroke-width="3" stroke-linecap="square" />
<polyline points="415.5,374.5 440.5,374.5" fill="none" stroke="#fff" stroke-width="1" stroke-linecap="butt" stroke-dasharray="2 2"/>
<polyline points="458.5,215.5 440.5,215.5 440.5,537.5 459.5,537.5" fill="none" stroke="#08086c" stroke-width="3" stroke-linecap="square" />
<polyline points="458.5,215.5 440.5,215.5 440.5,537.5 459.5,537.5" fill="none" stroke="#fff" stroke-width="1" stroke-linecap="butt" stroke-dasharray="2 2"/>
<circle cx="440.5" cy="374.5" r="3" fill="#08086c" shape-rendering="geometricPrecision"/><circle cx="440.5" cy="374.5" r="1.2" fill="#fff" shape-rendering="geometricPrecision"/>
<polyline points="555.5,260.5 604.5,260.5" fill="none" stroke="#08086c" stroke-width="3" stroke-linecap="square" />
<polyline points="555.5,260.5 604.5,260.5" fill="none" stroke="#fff" stroke-width="1" stroke-linecap="butt" stroke-dasharray="2 2"/>
<polyline points="556.5,582.5 562.5,582.5 562.5,516.5 606.5,516.5" fill="none" stroke="#08086c" stroke-width="3" stroke-linecap="square" />
<polyline points="556.5,582.5 562.5,582.5 562.5,516.5 606.5,516.5" fill="none" stroke="#fff" stroke-width="1" stroke-linecap="butt" stroke-dasharray="2 2"/>
<rect x="400" y="660" width="16" height="16" fill="#207020" />
<rect x="401" y="661" width="14" height="14" fill="#d8f0d0" />
<g shape-rendering="geometricPrecision"><circle cx="408" cy="668" r="5.2" fill="#fff" stroke="#000" stroke-width="1"/><circle cx="408" cy="668" r="3.8" fill="#e01818"/><circle cx="408" cy="668" r="1.9" fill="#207020"/></g>
<polyline points="416.5,671.5 521.5,671.5" fill="none" stroke="#186418" stroke-width="1" stroke-linecap="butt" stroke-dasharray="1 1"/>
<rect x="521" y="642" width="31" height="15" fill="#000" />
<rect x="522" y="643" width="29" height="13" fill="#fff" />
<text x="523" y="654" fill="#000" font-size="11" textLength="27" lengthAdjust="spacingAndGlyphs" stroke="#000" stroke-width="0.18" >Stopp</text>
<rect x="521" y="657" width="38" height="38" fill="#1a701a" />
<rect x="523" y="659" width="34" height="34" fill="#d4ecd0" />
<rect x="524" y="660" width="32" height="32" fill="#1a701a" />
<rect x="525" y="661" width="30" height="30" fill="#b6b6b6" />
<rect x="527" y="669" width="27" height="15" fill="#dedede" />
<text x="530" y="680.5" fill="#d02020" font-size="7" font-weight="bold" >ST</text>
<rect x="540" y="669" width="7" height="16" fill="#1a701a" />
<rect x="541" y="670" width="5" height="14" fill="#fff" />
<text x="540.7" y="681.5" fill="#000" font-size="11.5" stroke="#000" stroke-width="0.18" >F</text>
<text x="547.5" y="680" fill="#c0a040" font-size="8" stroke="#c0a040" stroke-width="0.18" >›</text>
<path d="M553.5 672 l3.5 4.5 l-3.5 4.5z" fill="#fff" stroke="#000" stroke-width="1" shape-rendering="geometricPrecision"/>
<rect x="532" y="686" width="17" height="7" fill="#fff" />
<rect x="532" y="686" width="17" height="9" fill="#1a701a" />
<rect x="533" y="687" width="15" height="7" fill="#fff" />
<rect x="533" y="693" width="15" height="2" fill="#fff" />
<text x="535" y="693.5" fill="#186418" font-size="7.5" font-weight="bold" textLength="11" lengthAdjust="spacingAndGlyphs" >T F</text>
<path fill-rule="evenodd" fill="url(#ring)" d="M604 108H1242V377H604z M610 114V371H1236V114z"/>
<path fill="none" stroke="#000" stroke-width="1" d="M604.5 108.5H1241.5V376.5H604.5z"/>
<path fill="none" stroke="#fff" stroke-width="1" stroke-dasharray="2 2" d="M609.5 113.5H1236.5V371.5H609.5z"/>
<rect x="889" y="108" width="68" height="15" fill="#000" />
<rect x="890" y="109" width="66" height="13" fill="#fff" />
<rect x="897" y="108" width="1" height="15" fill="#000" />
<rect x="947" y="108" width="1" height="15" fill="#000" />
<path d="M895 110.5 v8 l-4.5 -4z" fill="#000" />
<path d="M950 110.5 v8 l4.5 -4z" fill="#000" />
<text x="901" y="120" fill="#000" font-size="11" textLength="25" lengthAdjust="spacingAndGlyphs" stroke="#000" stroke-width="0.18" >TRUE</text>
<path d="M937.5 113 h7 l-3.5 4z" fill="#000" />
<rect x="604" y="208" width="8" height="12" fill="#207020" />
<rect x="605" y="209" width="6" height="10" fill="#dcf4c0" />
<text x="605.5" y="218" fill="#207020" font-size="9" font-weight="bold" stroke="#207020" stroke-width="0.18" >?</text>
<rect x="632" y="125" width="576" height="1" fill="#8c8c8c" />
<rect x="632" y="125" width="1" height="161" fill="#8c8c8c" />
<rect x="632" y="286" width="1" height="71" fill="#000" />
<rect x="1208" y="125" width="1" height="232" fill="#8c8c8c" />
<rect x="1210" y="128" width="1" height="231" fill="#b0b0b0" />
<rect x="1212" y="130" width="1" height="231" fill="#8c8c8c" />
<rect x="1208" y="127" width="3" height="1" fill="#b0b0b0" />
<rect x="1210" y="129" width="3" height="1" fill="#8c8c8c" />
<rect x="632" y="356" width="531" height="1" fill="#000" />
<rect x="1163" y="356" width="46" height="1" fill="#8c8c8c" />
<rect x="634" y="358" width="529" height="1" fill="#000" />
<rect x="1163" y="358" width="48" height="1" fill="#b0b0b0" />
<rect x="636" y="360" width="527" height="1" fill="#000" />
<rect x="1163" y="360" width="50" height="1" fill="#8c8c8c" />
<path d="M1200.5 356 v-7.5 h7.5 z" fill="#fff" stroke="#8c8c8c" stroke-width="1" shape-rendering="geometricPrecision"/>
<rect x="610" y="125" width="13" height="16" fill="#0000c0" />
<rect x="612" y="127" width="9" height="12" fill="#fff" />
<rect x="612" y="127" width="2" height="12" fill="#c8c8f0" />
<text x="611.5" y="137" fill="#000" font-size="11" textLength="10" lengthAdjust="spacingAndGlyphs" stroke="#000" stroke-width="0.18" >15</text>
<polyline points="623.5,133.5 632.5,133.5" fill="none" stroke="#1818a8" stroke-width="1" stroke-linecap="square" />
<rect x="632" y="126" width="15" height="15" fill="#9c9cf0" />
<rect x="634" y="128" width="11" height="11" fill="#fff" />
<text x="635" y="138" fill="#a8a8e8" font-size="11" stroke="#a8a8e8" stroke-width="0.18" >N</text>
<circle cx="640" cy="133.500" r="2.6" fill="#1010e0" shape-rendering="geometricPrecision"/>
<rect x="696" y="146" width="58" height="17" fill="#c8a0c8" />
<rect x="698" y="148" width="54" height="13" fill="#fff" />
<rect x="742" y="148" width="1" height="13" fill="#c8a0c8" />
<g shape-rendering="geometricPrecision" stroke="#a8a8a8" fill="none" stroke-width="0.9">
<path d="M699 148.5 h3 M700.5 148.5 v4.5 M699 153.0 h3" fill="none" />
<path d="M699.5 159.5 l6 -9" fill="none" />
<ellipse cx="705" cy="157.5" rx="1.5" ry="2.5"/>
</g>
<text x="709" y="159" fill="#8c8c8c" font-size="11" textLength="27" lengthAdjust="spacingAndGlyphs" stroke="#8c8c8c" stroke-width="0.18" >COM1</text>
<path d="M745 152 h7 l-3.5 4z" fill="#780078" />
<rect x="753" y="151" width="2" height="7" fill="#780078" />
<line x1="755" y1="153.5" x2="819" y2="153.5" stroke="#780078" stroke-width="1" stroke-dasharray="3 1"/>
<line x1="755" y1="154.5" x2="819" y2="154.5" stroke="#780078" stroke-width="1" stroke-dasharray="3 1" stroke-dashoffset="2"/>
<line x1="818.5" y1="151" x2="818.5" y2="167" stroke="#780078" stroke-width="1" stroke-dasharray="3 1"/>
<line x1="819.5" y1="151" x2="819.5" y2="167" stroke="#780078" stroke-width="1" stroke-dasharray="3 1" stroke-dashoffset="2"/>
<line x1="818" y1="150.5" x2="875" y2="150.5" stroke="#780078" stroke-width="1" stroke-dasharray="3 1"/>
<line x1="818" y1="151.5" x2="875" y2="151.5" stroke="#780078" stroke-width="1" stroke-dasharray="3 1" stroke-dashoffset="2"/>
<line x1="874.5" y1="151" x2="874.5" y2="252" stroke="#780078" stroke-width="1" stroke-dasharray="3 1"/>
<line x1="875.5" y1="151" x2="875.5" y2="252" stroke="#780078" stroke-width="1" stroke-dasharray="3 1" stroke-dashoffset="2"/>
<line x1="874" y1="250.5" x2="906" y2="250.5" stroke="#780078" stroke-width="1" stroke-dasharray="3 1"/>
<line x1="874" y1="251.5" x2="906" y2="251.5" stroke="#780078" stroke-width="1" stroke-dasharray="3 1" stroke-dashoffset="2"/>
<circle cx="818.5" cy="154" r="2.3" fill="#800080" shape-rendering="geometricPrecision"/>
<line x1="751" y1="178.5" x2="815" y2="178.5" stroke="#e018d0" stroke-width="1" stroke-dasharray="3 1"/>
<line x1="751" y1="179.5" x2="815" y2="179.5" stroke="#e018d0" stroke-width="1" stroke-dasharray="3 1" stroke-dashoffset="2"/>
<line x1="751.5" y1="179" x2="751.5" y2="278" stroke="#e018d0" stroke-width="1" stroke-dasharray="3 1"/>
<line x1="752.5" y1="179" x2="752.5" y2="278" stroke="#e018d0" stroke-width="1" stroke-dasharray="3 1" stroke-dashoffset="2"/>
<line x1="751" y1="276.5" x2="787" y2="276.5" stroke="#e018d0" stroke-width="1" stroke-dasharray="3 1"/>
<line x1="751" y1="277.5" x2="787" y2="277.5" stroke="#e018d0" stroke-width="1" stroke-dasharray="3 1" stroke-dashoffset="2"/>
<rect x="735" y="209" width="49" height="16" fill="#94c8c8" />
<rect x="737" y="211" width="45" height="12" fill="#fff" />
<rect x="738" y="212" width="3" height="3" fill="#a0a0a0" />
<rect x="739" y="213" width="1" height="1" fill="#fff" />
<rect x="740" y="216" width="3" height="3" fill="#a0a0a0" />
<rect x="741" y="217" width="1" height="1" fill="#fff" />
<text x="745" y="221.5" fill="#909090" font-size="11.5" textLength="36" lengthAdjust="spacingAndGlyphs" stroke="#909090" stroke-width="0.18" >C:\Test</text>
<rect x="783" y="209" width="56" height="16" fill="#008080" />
<rect x="784" y="210" width="54" height="14" fill="#fff" />
<rect x="783" y="209" width="56" height="1" fill="#008080" />
<rect x="783" y="224" width="56" height="1" fill="#008080" />
<text x="785.5" y="221.5" fill="#000" font-size="11.5" textLength="51" lengthAdjust="spacingAndGlyphs" stroke="#000" stroke-width="0.18" >*_Start.txt</text>
<rect x="749" y="209" width="5" height="2" fill="#008080" />
<rect x="749" y="223" width="5" height="2" fill="#008080" />
<polyline points="821,225 821,270" fill="none" stroke="#008080" stroke-width="2" stroke-linecap="square" />
<rect x="703" y="257" width="13" height="17" fill="#a8a8e8" />
<rect x="705" y="259" width="9" height="13" fill="#fff" />
<rect x="707" y="257" width="10" height="17" fill="#0000c0" />
<rect x="709" y="259" width="6" height="13" fill="#fff" />
<text x="709" y="270" fill="#000" font-size="11" stroke="#000" stroke-width="0.18" >1</text>
<text x="704.5" y="270" fill="#a0a0c0" font-size="11" stroke="#a0a0c0" stroke-width="0.18" >1</text>
<polyline points="717.5,261.5 749.5,261.5" fill="none" stroke="#1818a8" stroke-width="1" stroke-linecap="square" />
<polyline points="754.5,261.5 791.5,261.5 791.5,266.5" fill="none" stroke="#1818a8" stroke-width="1" stroke-linecap="square" />
<rect x="759" y="285" width="19" height="17" fill="#0000c0" />
<rect x="761" y="287" width="15" height="13" fill="#fff" />
<text x="762.5" y="298" fill="#000" font-size="11" textLength="12" lengthAdjust="spacingAndGlyphs" stroke="#000" stroke-width="0.18" >15</text>
<polyline points="778.5,294.5 786.5,294.5" fill="none" stroke="#1818a8" stroke-width="1" stroke-linecap="square" />
<rect x="644" y="299" width="19" height="17" fill="#0000c0" />
<rect x="646" y="301" width="15" height="13" fill="#fff" />
<text x="647.5" y="312" fill="#000" font-size="11" textLength="12" lengthAdjust="spacingAndGlyphs" stroke="#000" stroke-width="0.18" >15</text>
<polyline points="663.5,307.5 681.5,307.5 681.5,319.5 688.5,319.5" fill="none" stroke="#1818a8" stroke-width="1" stroke-linecap="square" />
<rect x="641" y="333" width="16" height="16" fill="#0000c0" />
<rect x="643" y="335" width="12" height="12" fill="#fff" />
<text x="646.5" y="345.5" fill="#0000c0" font-size="13" font-weight="bold" stroke="#0000c0" stroke-width="0.18" >i</text>
<polyline points="657.5,341.5 663.5,341.5 663.5,329.5 688.5,329.5" fill="none" stroke="#1818a8" stroke-width="1" stroke-linecap="square" />
<path d="M687.5 314.5 l20 10 l-20 10z" fill="#ffffc4" stroke="#707070" stroke-width="1" shape-rendering="geometricPrecision"/>
<path d="M691 322 l5 5 M696 322 l-5 5" fill="none" stroke="#000" stroke-width="1.5" shape-rendering="geometricPrecision"/>
<polyline points="707.5,324.5 714.5,324.5 714.5,300.5 727.5,300.5 727.5,285.5 786.5,285.5" fill="none" stroke="#1818a8" stroke-width="1" stroke-linecap="square" />
<rect x="786" y="265" width="32" height="32" fill="#000" />
<rect x="787" y="266" width="30" height="30" fill="#fff" />
<rect x="788" y="267" width="28" height="13" fill="#000" />
<rect x="789" y="268" width="26" height="11" fill="#fff" />
<rect x="790" y="269" width="1" height="10" fill="#000" />
<rect x="788" y="277" width="28" height="1" fill="#000" />
<text x="792.5" y="277" fill="#000" font-size="9.5" textLength="14" lengthAdjust="spacingAndGlyphs" stroke="#000" stroke-width="0.18" >abc</text>
<path d="M808 268 v4 m-2 -2 l2 2.5 l2 -2.5" fill="none" stroke="#000" stroke-width="1" shape-rendering="geometricPrecision"/>
<path d="M806 278 l6 -7" fill="none" stroke="#000" stroke-width="1" shape-rendering="geometricPrecision"/>
<rect x="788" y="282" width="15" height="13" fill="#000" />
<rect x="790" y="284" width="11" height="9" fill="#fff" />
<rect x="792" y="283" width="7" height="4" fill="#000" />
<rect x="793" y="284" width="4" height="2" fill="#fff" />
<rect x="791" y="291" width="9" height="3" fill="#d0d0d0" />
<rect x="791" y="290" width="9" height="1" fill="#000" />
<path d="M805 291 h4 q2 0 2 -3 v-3 m-2 2 l2 -2.5 l2 2.5" fill="none" stroke="#000" stroke-width="1.2" shape-rendering="geometricPrecision"/>
<rect x="811" y="270" width="69" height="15" fill="#c030c0" />
<rect x="812" y="271" width="67" height="13" fill="#fff" />
<rect x="811" y="284" width="69" height="1" fill="#c030c0" />
<text x="813" y="282" fill="#000" font-size="11.5" textLength="63" lengthAdjust="spacingAndGlyphs" stroke="#000" stroke-width="0.18" >STX_SREM K*</text>
<rect x="814" y="167" width="32" height="32" fill="#000" />
<rect x="815" y="168" width="30" height="30" fill="#ffffc4" />
<text x="815.5" y="175.8" fill="#000" font-size="9.5" font-weight="bold" textLength="18.5" lengthAdjust="spacingAndGlyphs" stroke="#000" stroke-width="0.18" font-style="italic">VISA</text>
<text x="816" y="185" fill="#000" font-size="10" textLength="15" lengthAdjust="spacingAndGlyphs" stroke="#000" stroke-width="0.18" >abc</text>
<g shape-rendering="geometricPrecision">
<path d="M831 181 q3 -1 5 3" fill="none" stroke="#000" stroke-width="1" />
<path d="M837.5 187 l-3.5 -2 l2.5 -2z" fill="#000" />
</g>
<text x="817" y="196" fill="#000" font-size="10.5" font-weight="bold" textLength="10" lengthAdjust="spacingAndGlyphs" stroke="#000" stroke-width="0.18" >W</text>
<rect x="828" y="189" width="16" height="8" fill="#000" />
<rect x="829" y="190" width="14" height="6" fill="#ffffc4" />
<rect x="830" y="191" width="8" height="4" fill="#000" />
<rect x="831" y="192" width="6" height="2" fill="#fff" />
<rect x="833" y="192" width="2" height="2" fill="#000" />
<rect x="840" y="191" width="2" height="1" fill="#000" />
<rect x="840" y="194" width="2" height="1" fill="#000" />
<rect x="905" y="248" width="32" height="32" fill="#000" />
<rect x="906" y="249" width="30" height="30" fill="#ffffc4" />
<text x="906.5" y="256.8" fill="#000" font-size="9.5" font-weight="bold" textLength="18.5" lengthAdjust="spacingAndGlyphs" stroke="#000" stroke-width="0.18" font-style="italic">VISA</text>
<text x="907" y="266" fill="#000" font-size="10" textLength="15" lengthAdjust="spacingAndGlyphs" stroke="#000" stroke-width="0.18" >abc</text>
<g shape-rendering="geometricPrecision">
<path d="M930 267 q-1 -4 -5 -4" fill="none" stroke="#000" stroke-width="1" />
<path d="M923 261 l4 0 l-2 3z" fill="#000" />
</g>
<text x="908" y="277" fill="#000" font-size="10.5" font-weight="bold" textLength="7" lengthAdjust="spacingAndGlyphs" stroke="#000" stroke-width="0.18" >R</text>
<rect x="919" y="270" width="16" height="8" fill="#000" />
<rect x="920" y="271" width="14" height="6" fill="#ffffc4" />
<rect x="921" y="272" width="8" height="4" fill="#000" />
<rect x="922" y="273" width="6" height="2" fill="#fff" />
<rect x="924" y="273" width="2" height="2" fill="#000" />
<rect x="931" y="272" width="2" height="1" fill="#000" />
<rect x="931" y="275" width="2" height="1" fill="#000" />
<rect x="853" y="302" width="10" height="16" fill="#a8a8e8" />
<rect x="855" y="304" width="6" height="12" fill="#fff" />
<text x="855" y="314" fill="#909090" font-size="11" stroke="#909090" stroke-width="0.18" >2</text>
<rect x="861" y="302" width="15" height="16" fill="#0000c0" />
<rect x="863" y="304" width="11" height="12" fill="#fff" />
<text x="862.5" y="314" fill="#000" font-size="11" textLength="12" lengthAdjust="spacingAndGlyphs" stroke="#000" stroke-width="0.18" >20</text>
<polyline points="876.5,310.5 896.5,310.5 896.5,260.5 905.5,260.5" fill="none" stroke="#1818a8" stroke-width="1" stroke-linecap="square" />
<path d="M905 257 l3 3 l-3 3z" fill="#404080" />
<polyline points="934.5,280.5 934.5,288.5" fill="none" stroke="#000" stroke-width="1" stroke-linecap="butt" stroke-dasharray="1 1"/>
<rect x="916" y="287" width="34" height="15" fill="#000" />
<rect x="917" y="288" width="32" height="13" fill="#fff" />
<text x="917.5" y="299" fill="#686868" font-size="11.5" textLength="29" lengthAdjust="spacingAndGlyphs" stroke="#686868" stroke-width="0.18" >Zurüc</text>
<rect x="947" y="288" width="2" height="13" fill="#fff" />
<rect x="916" y="302" width="38" height="38" fill="#b4b4e8" />
<rect x="918" y="304" width="34" height="34" fill="#dcdcf6" />
<rect x="920" y="306" width="30" height="28" fill="#cecece" />
<rect x="916" y="332" width="38" height="8" fill="#20209c" />
<rect x="919" y="332" width="32" height="5" fill="#fff" />
<rect x="921" y="332" width="28" height="5" fill="#a4a4a4" />
<rect x="926" y="312" width="20" height="16" fill="#e8e8e8" />
<rect x="926" y="312" width="20" height="16" fill="#f6f6f6" />
<rect x="927" y="313" width="18" height="14" fill="#e8e8e8" />
<text x="929" y="324.5" fill="#a8a8a8" font-size="10.5" textLength="15" lengthAdjust="spacingAndGlyphs" stroke="#a8a8a8" stroke-width="0.18" >1.23</text>
<path d="M920.5 315.500 l4 4.5 l-4 4.5z" fill="#e8e8e8" stroke="#f8f8f8" stroke-width="1" shape-rendering="geometricPrecision"/>
<rect x="927" y="331" width="18" height="9" fill="#20209c" />
<rect x="928" y="332" width="16" height="7" fill="#fff" />
<rect x="928" y="338" width="16" height="2" fill="#fff" />
<text x="929.5" y="338.5" fill="#20209c" font-size="7" font-weight="bold" textLength="13" lengthAdjust="spacingAndGlyphs" >U32</text>
<polyline points="937,260 946,260 946,247" fill="none" stroke="#000" stroke-width="2" stroke-linecap="butt" stroke-dasharray="1 1"/>
<path d="M939 243 h14 l-7 5z" fill="url(#chk)" stroke="#404040" stroke-width="0.6" />
<line x1="953.5" y1="137" x2="953.5" y2="248" stroke="#f4a8ec" stroke-width="1" stroke-dasharray="3 1"/>
<line x1="954.5" y1="137" x2="954.5" y2="248" stroke="#f4a8ec" stroke-width="1" stroke-dasharray="3 1" stroke-dashoffset="2"/>
<line x1="953" y1="136.5" x2="1104" y2="136.5" stroke="#f4a8ec" stroke-width="1" stroke-dasharray="3 1"/>
<line x1="953" y1="137.5" x2="1104" y2="137.5" stroke="#f4a8ec" stroke-width="1" stroke-dasharray="3 1" stroke-dashoffset="2"/>
<line x1="1103.5" y1="137" x2="1103.5" y2="234" stroke="#f4a8ec" stroke-width="1" stroke-dasharray="3 1"/>
<line x1="1104.5" y1="137" x2="1104.5" y2="234" stroke="#f4a8ec" stroke-width="1" stroke-dasharray="3 1" stroke-dashoffset="2"/>
<line x1="1103" y1="232.5" x2="1135" y2="232.5" stroke="#f4a8ec" stroke-width="1" stroke-dasharray="3 1"/>
<line x1="1103" y1="233.5" x2="1135" y2="233.5" stroke="#f4a8ec" stroke-width="1" stroke-dasharray="3 1" stroke-dashoffset="2"/>
<line x1="953" y1="246.5" x2="985" y2="246.5" stroke="#f4a8ec" stroke-width="1" stroke-dasharray="3 1"/>
<line x1="953" y1="247.5" x2="985" y2="247.5" stroke="#f4a8ec" stroke-width="1" stroke-dasharray="3 1" stroke-dashoffset="2"/>
<rect x="984" y="155" width="96" height="139" fill="#b2beec" />
<rect x="985" y="156" width="94" height="137" fill="#e6f1fd" />
<rect x="985" y="211" width="94" height="74" fill="#fff" />
<rect x="984" y="210" width="96" height="1" fill="#b2beec" />
<rect x="984" y="225" width="96" height="1" fill="#b2beec" />
<rect x="984" y="240" width="96" height="1" fill="#b2beec" />
<rect x="984" y="255" width="96" height="1" fill="#b2beec" />
<rect x="984" y="270" width="96" height="1" fill="#b2beec" />
<rect x="984" y="285" width="96" height="1" fill="#b2beec" />
<text x="1030.5" y="206.6" fill="#76768a" font-size="11" textLength="73" lengthAdjust="spacingAndGlyphs" text-anchor="middle" stroke="#76768a" stroke-width="0.18" >Systemantwort</text>
<clipPath id="csa"><rect x="985" y="155" width="92" height="139"/></clipPath>
<clipPath id="csao"><rect x="985" y="155" width="89.5" height="139"/></clipPath>
<text x="1032.5" y="222" fill="#8cc48c" font-size="11" textLength="47" lengthAdjust="spacingAndGlyphs" text-anchor="middle" stroke="#8cc48c" stroke-width="0.18" >Aktivieren</text>
<text x="990.3" y="237" fill="#f094dc" font-size="11" textLength="139.5" lengthAdjust="spacingAndGlyphs" stroke="#f094dc" stroke-width="0.18" clip-path="url(#csa)">Fehler (Eingang, kein Fehler)</text>
<text x="1032.5" y="252" fill="#f094dc" font-size="11" textLength="40" lengthAdjust="spacingAndGlyphs" text-anchor="middle" stroke="#f094dc" stroke-width="0.18" >Meldung</text>
<text x="988" y="267" fill="#f094dc" font-size="11" textLength="83" lengthAdjust="spacingAndGlyphs" stroke="#f094dc" stroke-width="0.18" clip-path="url(#csao)">Fehler (Ausgang)</text>
<text x="1030.0" y="282" fill="#98c898" font-size="11" textLength="13" lengthAdjust="spacingAndGlyphs" text-anchor="middle" stroke="#98c898" stroke-width="0.18" >OK</text>
<path d="M986 215 l3.2 3 l-3.2 3z" fill="#8a8aa0" shape-rendering="geometricPrecision"/>
<path d="M986 230 l3.2 3 l-3.2 3z" fill="#8a8aa0" shape-rendering="geometricPrecision"/>
<path d="M986 245 l3.2 3 l-3.2 3z" fill="#8a8aa0" shape-rendering="geometricPrecision"/>
<path d="M1074.5 260 l3.2 3 l-3.2 3z" fill="#8a8aa0" shape-rendering="geometricPrecision"/>
<path d="M1074.5 275 l3.2 3 l-3.2 3z" fill="#8a8aa0" shape-rendering="geometricPrecision"/>
<g transform="translate(1016,159)" shape-rendering="geometricPrecision">
<rect x="0.5" y="0.5" width="31" height="31" rx="4" fill="#fff" stroke="#8c8ca8" stroke-width="1"/>
<path d="M1 4 q0 -3 3.5 -3 h23 q3.500 0 3.5 3 z" fill="#8888d8" />
<rect x="2.5" y="6" width="11" height="9" fill="#b4c878" stroke="#a0a0a0" stroke-width="1"/>
<text x="5" y="14" fill="#f0f070" font-size="8" font-weight="bold" stroke="#f0f070" stroke-width="0.18" >A</text>
<path d="M3 17.500 h10" fill="none" stroke="#b0b0b0" stroke-width="1.5" />
<circle cx="22.5" cy="10.5" r="3.2" fill="#e8e8e8" stroke="#b0b0b0" stroke-width="0.8"/>
<path d="M18.5 16 q4 -3 8 0 v8 l-1 5 h-5.5 l-1 -5z" fill="#f0b878" stroke="#d8a060" stroke-width="0.6" />
<ellipse cx="26" cy="29" rx="3" ry="1.2" fill="#c0c0c0"/>
</g>
<line x1="1130" y1="197.5" x2="1206" y2="197.5" stroke="#008080" stroke-width="1" stroke-dasharray="3 1"/>
<line x1="1130" y1="198.5" x2="1206" y2="198.5" stroke="#008080" stroke-width="1" stroke-dasharray="3 1" stroke-dashoffset="2"/>
<line x1="1130.5" y1="198" x2="1130.5" y2="222" stroke="#008080" stroke-width="1" stroke-dasharray="3 1"/>
<line x1="1131.5" y1="198" x2="1131.5" y2="222" stroke="#008080" stroke-width="1" stroke-dasharray="3 1" stroke-dashoffset="2"/>
<line x1="1130" y1="220.5" x2="1135" y2="220.5" stroke="#008080" stroke-width="1" stroke-dasharray="3 1"/>
<line x1="1130" y1="221.5" x2="1135" y2="221.5" stroke="#008080" stroke-width="1" stroke-dasharray="3 1" stroke-dashoffset="2"/>
<rect x="1134" y="216" width="32" height="32" fill="#a0a0a0" />
<rect x="1135" y="217" width="30" height="30" fill="#fff" />
<rect x="1136" y="218" width="26" height="12" fill="#a0a0a0" />
<rect x="1137" y="219" width="24" height="10" fill="#fff" />
<text x="1140" y="228" fill="#a8a8a8" font-size="9" stroke="#a8a8a8" stroke-width="0.18" >abc...</text>
<circle cx="1142" cy="221" r="2.6" fill="#208080" shape-rendering="geometricPrecision"/>
<path d="M1140 232 v4 q0 2 2 2 h5 m-2 -2 l2.5 2 l-2.5 2" fill="none" stroke="#a0a0a0" stroke-width="1" shape-rendering="geometricPrecision"/>
<rect x="1151" y="233" width="13" height="13" fill="#a0a0a0" />
<rect x="1152" y="234" width="11" height="11" fill="#fff" />
<rect x="1154" y="234" width="6" height="3" fill="#c0c0c0" />
<circle cx="1142.5" cy="243" r="2.5" fill="#208040" shape-rendering="geometricPrecision"/><circle cx="1159" cy="243" r="2.5" fill="#208040" shape-rendering="geometricPrecision"/>
<path d="M1135 243h4M1137 241v4" fill="none" stroke="#80a080" stroke-width="1" />
<polyline points="1127.5,293.5 1127.5,242.5 1134.5,242.5" fill="none" stroke="#186418" stroke-width="1" stroke-linecap="butt" stroke-dasharray="1 1"/>
<polyline points="1158.5,248.5 1158.5,294.5 1181.5,294.5" fill="none" stroke="#186418" stroke-width="1" stroke-linecap="butt" stroke-dasharray="1 1"/>
<rect x="1100" y="288" width="26" height="14" fill="#a8d4a0" />
<rect x="1102" y="290" width="22" height="10" fill="#fff" />
<rect x="1103" y="290" width="9" height="10" fill="#8cc48c" />
<text x="1104.5" y="299" fill="#fff" font-size="9" font-weight="bold" stroke="#fff" stroke-width="0.18" >T</text>
<rect x="1123" y="288" width="3" height="14" fill="#1a801a" />
<rect x="1112" y="287" width="8" height="16" fill="#1a601a" />
<rect x="1113" y="288" width="6" height="14" fill="#fff" />
<text x="1113" y="299.5" fill="#000" font-size="11" stroke="#000" stroke-width="0.18" >T</text>
<rect x="1180" y="287" width="26" height="14" fill="#a8d4a0" />
<rect x="1182" y="289" width="22" height="10" fill="#fff" />
<rect x="1183" y="289" width="9" height="10" fill="#1a801a" />
<text x="1184.5" y="298" fill="#fff" font-size="9" font-weight="bold" stroke="#fff" stroke-width="0.18" >T</text>
<rect x="1180" y="289" width="3" height="10" fill="#1a801a" />
<rect x="1192" y="286" width="8" height="16" fill="#1a601a" />
<rect x="1193" y="287" width="6" height="14" fill="#fff" />
<text x="1193" y="298.5" fill="#000" font-size="11" stroke="#000" stroke-width="0.18" >T</text>
<rect x="1204" y="196" width="4" height="6" fill="#206060" />
<rect x="1207" y="191" width="51" height="15" fill="#008080" />
<rect x="1208" y="192" width="49" height="13" fill="#fff" />
<text x="1209" y="203" fill="#000" font-size="11.5" textLength="46" lengthAdjust="spacingAndGlyphs" stroke="#000" stroke-width="0.18" >*tokoll.txt</text>
<rect x="1232" y="231" width="5" height="7" fill="#206060" />
<clipPath id="cvr"><rect x="255" y="77" width="1007" height="676"/></clipPath>
<g clip-path="url(#cvr)">
<rect x="1236" y="227" width="54" height="15" fill="#008080" />
<rect x="1237" y="228" width="52" height="13" fill="#fff" />
<text x="1238" y="239" fill="#000" font-size="11.5" textLength="46" lengthAdjust="spacingAndGlyphs" stroke="#000" stroke-width="0.18" >*tokoll.txt</text>
</g>
<path fill-rule="evenodd" fill="url(#ring)" d="M606 410H1240V666H606z M612 416V660H1234V416z"/>
<path fill="none" stroke="#000" stroke-width="1" d="M606.5 410.5H1239.5V665.5H606.5z"/>
<path fill="none" stroke="#fff" stroke-width="1" stroke-dasharray="2 2" d="M611.5 415.5H1234.5V660.5H611.5z"/>
<rect x="607" y="510" width="8" height="12" fill="#207020" />
<rect x="608" y="511" width="6" height="10" fill="#dcf4c0" />
<text x="608.5" y="520" fill="#207020" font-size="9" font-weight="bold" stroke="#207020" stroke-width="0.18" >?</text>
<rect x="1231" y="532" width="7" height="8" fill="#107070" />
<rect x="1233" y="534" width="4" height="4" fill="#209090" />
<line x1="1238" y1="535.5" x2="1263" y2="535.5" stroke="#40a0a0" stroke-width="1" stroke-dasharray="3 1"/>
<line x1="1238" y1="536.5" x2="1263" y2="536.5" stroke="#40a0a0" stroke-width="1" stroke-dasharray="3 1" stroke-dashoffset="2"/>
<rect x="768" y="388" width="338" height="197" fill="#404040" />
<rect x="768" y="388" width="337" height="196" fill="#d4d0c8" />
<rect x="769" y="389" width="336" height="195" fill="#808080" />
<rect x="769" y="389" width="335" height="194" fill="#fff" />
<rect x="770" y="390" width="334" height="193" fill="#d4d0c8" />
<rect x="771" y="390" width="332" height="18" fill="url(#dg)" />
<g transform="translate(774,391.500) scale(0.93)">
</g>
<g transform="translate(774,392) scale(0.93)">
<rect x="0" y="0" width="15" height="16" fill="#000" />
<rect x="1" y="1" width="13" height="14" fill="#303030" />
<rect x="1" y="1" width="1" height="1" fill="#fff" />
<rect x="1" y="14" width="1" height="1" fill="#fff" />
<rect x="3" y="1" width="1" height="1" fill="#fff" />
<rect x="3" y="14" width="1" height="1" fill="#fff" />
<rect x="5" y="1" width="1" height="1" fill="#fff" />
<rect x="5" y="14" width="1" height="1" fill="#fff" />
<rect x="7" y="1" width="1" height="1" fill="#fff" />
<rect x="7" y="14" width="1" height="1" fill="#fff" />
<rect x="9" y="1" width="1" height="1" fill="#fff" />
<rect x="9" y="14" width="1" height="1" fill="#fff" />
<rect x="11" y="1" width="1" height="1" fill="#fff" />
<rect x="11" y="14" width="1" height="1" fill="#fff" />
<rect x="13" y="1" width="1" height="1" fill="#fff" />
<rect x="13" y="14" width="1" height="1" fill="#fff" />
<rect x="1" y="3" width="1" height="1" fill="#d8d8ff" />
<rect x="13" y="3" width="1" height="1" fill="#d8d8ff" />
<rect x="1" y="5" width="1" height="1" fill="#d8d8ff" />
<rect x="13" y="5" width="1" height="1" fill="#d8d8ff" />
<rect x="1" y="7" width="1" height="1" fill="#d8d8ff" />
<rect x="13" y="7" width="1" height="1" fill="#d8d8ff" />
<rect x="1" y="9" width="1" height="1" fill="#d8d8ff" />
<rect x="13" y="9" width="1" height="1" fill="#d8d8ff" />
<rect x="1" y="11" width="1" height="1" fill="#d8d8ff" />
<rect x="13" y="11" width="1" height="1" fill="#d8d8ff" />
<path d="M2.5 2.8 L13.6 8 L2.5 13.200z" fill="#ffff70" stroke="#000" stroke-width="0.7" shape-rendering="geometricPrecision"/>
<path d="M4 8h5.500M6.700 5.300v5.400" fill="none" stroke="#000" stroke-width="1.3" shape-rendering="geometricPrecision"/>
</g>
<rect x="1086" y="392" width="16" height="14" fill="#404040" />
<rect x="1086" y="392" width="15" height="13" fill="#fff" />
<rect x="1087" y="393" width="14" height="12" fill="#808080" />
<rect x="1087" y="393" width="13" height="11" fill="#d4d0c8" />
<path d="M1090.5 395.5 l7 7 M1097.5 395.5 l-7 7" fill="none" stroke="#000" stroke-width="1.6" shape-rendering="geometricPrecision"/>
<rect x="778" y="417" width="34" height="35" fill="#000" />
<rect x="779" y="418" width="32" height="33" fill="#d4d0c8" />
<defs><radialGradient id="rg" cx="0.4" cy="0.3" r="0.75"><stop offset="0" stop-color="#ff6060"/><stop offset="0.45" stop-color="#e01010"/><stop offset="1" stop-color="#900000"/></radialGradient></defs>
<g shape-rendering="geometricPrecision">
<ellipse cx="797.5" cy="438" rx="14" ry="12" fill="#303030" opacity="0.55"/>
<circle cx="794.5" cy="434" r="15.3" fill="url(#rg)"/>
<path d="M788 427 l14 14 M802 427 l-14 14" fill="none" stroke="#fff" stroke-width="4.2" />
</g>
<text x="818.5" y="430" fill="#000" font-size="11" font-weight="bold" textLength="232" lengthAdjust="spacingAndGlyphs" stroke="#000" stroke-width="0.18" >Fehler -1073807339 ist bei VISA: Lesen in</text>
<text x="818.5" y="443" fill="#000" font-size="11" font-weight="bold" textLength="269" lengthAdjust="spacingAndGlyphs" stroke="#000" stroke-width="0.18" >AnalogSchwellwertCOMAusgabe170108Test2PS</text>
<text x="818.5" y="456" fill="#000" font-size="11" font-weight="bold" textLength="141" lengthAdjust="spacingAndGlyphs" stroke="#000" stroke-width="0.18" >TTRIGGER.vi aufgetreten</text>
<text x="782.5" y="499.5" fill="#000" font-size="11" font-weight="bold" textLength="97" lengthAdjust="spacingAndGlyphs" stroke="#000" stroke-width="0.18" >Mögliche Gründe:</text>
<text x="782.5" y="526" fill="#000" font-size="11" textLength="307" lengthAdjust="spacingAndGlyphs" stroke="#000" stroke-width="0.18" >VISA:  (Hex 0xBFFF0015) Timeout abgelaufen, bevor Operation</text>
<text x="782.5" y="539" fill="#000" font-size="11" textLength="54" lengthAdjust="spacingAndGlyphs" stroke="#000" stroke-width="0.18" >vollständig.</text>
<rect x="948" y="547" width="62" height="26" fill="#000" />
<rect x="949" y="548" width="60" height="24" fill="#404040" />
<rect x="949" y="548" width="59" height="23" fill="#fff" />
<rect x="950" y="549" width="58" height="22" fill="#808080" />
<rect x="950" y="549" width="57" height="21" fill="#d4d0c8" />
<rect x="952.5" y="551.5" width="53" height="17" fill="none" stroke="#000" stroke-width="1" stroke-dasharray="1 1"/>
<text x="979" y="564.5" fill="#000" font-size="11" textLength="14" lengthAdjust="spacingAndGlyphs" text-anchor="middle" stroke="#000" stroke-width="0.18" >OK</text>
<rect x="1033" y="548" width="60" height="24" fill="#404040" />
<rect x="1033" y="548" width="59" height="23" fill="#fff" />
<rect x="1034" y="549" width="58" height="22" fill="#808080" />
<rect x="1034" y="549" width="57" height="21" fill="#d4d0c8" />
<text x="1063" y="564.5" fill="#000" font-size="11" textLength="28" lengthAdjust="spacingAndGlyphs" text-anchor="middle" stroke="#000" stroke-width="0.18" >Stopp</text>
<rect x="0" y="771" width="1280" height="29" fill="#d4d0c8" />
<rect x="0" y="772" width="1280" height="1" fill="#fff" />
<rect x="2" y="776" width="52" height="22" fill="#404040" />
<rect x="2" y="776" width="51" height="21" fill="#fff" />
<rect x="3" y="777" width="50" height="20" fill="#808080" />
<rect x="3" y="777" width="49" height="19" fill="#d4d0c8" />
<g shape-rendering="geometricPrecision">
<path d="M6 780.5 q2.800 -2 5.500 0 l-1.200 5.500 q-2.700 -2 -5.500 0z" fill="#e84820" />
<path d="M12.3 780.8 q2.800 2 5.700 0 l-1.200 5.500 q-2.900 2 -5.700 0z" fill="#38a838" />
<path d="M4.6 787.3 q2.800 -2 5.500 0 l-1.200 5.500 q-2.700 -2 -5.500 0z" fill="#3868e8" />
<path d="M10.9 787.6 q2.800 2 5.700 0 l-1.200 5.500 q-2.900 2 -5.700 0z" fill="#f0c828" />
</g>
<text x="22" y="790.8" fill="#000" font-size="11.5" font-weight="bold" textLength="28" lengthAdjust="spacingAndGlyphs" stroke="#000" stroke-width="0.18" >Start</text>
<clipPath id="iec"><rect x="86" y="786" width="16" height="10"/></clipPath>
<g shape-rendering="geometricPrecision">
<rect x="63" y="779.5" width="13.5" height="14" rx="3" fill="#e4f2ff" stroke="#2c7cd8" stroke-width="1.8"/>
<path d="M72.5 783 h-4 q-2 0 -2 2 v2.500 q0 2 2 2 h4 M68.5 786.2 h5.500 m-2.200 -2.200 l2.400 2.200 l-2.400 2.200" fill="none" stroke="#2060c0" stroke-width="1.5" />
<text x="87.5" y="793.5" fill="#1c74d4" font-size="17" font-weight="bold" stroke="#1c74d4" stroke-width="0.18" >e</text>
<ellipse cx="94" cy="786.500" rx="8.5" ry="3.2" fill="none" stroke="#f0a818" stroke-width="1.5" transform="rotate(-32 94 786.500)"/>
<text x="87.5" y="793.5" fill="#2c8ce8" font-size="17" font-weight="bold" stroke="#2c8ce8" stroke-width="0.18" clip-path="url(#iec)">e</text>
<rect x="108" y="779" width="16" height="16" fill="#8c9010" />
<rect x="110" y="781" width="12" height="12" rx="3.5" fill="#fbfbe8"/>
<circle cx="116" cy="787" r="4.6" fill="#8c9010"/>
<path d="M115.8 783.8 v3.700 h3.200" fill="none" stroke="#fbfbe8" stroke-width="1.5" />
</g>
<text x="135.5" y="787.5" fill="#000" font-size="14" font-weight="bold" stroke="#000" stroke-width="0.18" >»</text>
<rect x="148" y="776" width="160" height="22" fill="#404040" />
<rect x="148" y="776" width="159" height="21" fill="#fff" />
<rect x="149" y="777" width="158" height="20" fill="#808080" />
<rect x="149" y="777" width="157" height="19" fill="#d4d0c8" />
<g shape-rendering="geometricPrecision">
<path d="M153 786 l8 -3.5 l8 2.5 v3 l-8 3.5 l-8 -2.5z" fill="#c8c8c8" stroke="#606060" stroke-width="0.8" />
<path d="M153 786 l8 2.5 l8 -3.5" fill="none" stroke="#f8f8f8" stroke-width="1" />
</g>
<text x="171.5" y="791" fill="#000" font-size="11" stroke="#000" stroke-width="0.18" >H:\</text>
<rect x="311" y="776" width="160" height="22" fill="#fff" />
<rect x="311" y="776" width="159" height="21" fill="#808080" />
<rect x="312" y="777" width="158" height="20" fill="#d4d0c8" />
<rect x="312" y="777" width="157" height="19" fill="#404040" />
<rect x="313" y="778" width="156" height="18" fill="url(#dith)" />
<g transform="translate(316,780) scale(1)">
<rect x="0" y="0" width="15" height="16" fill="#000" />
<rect x="1" y="1" width="13" height="14" fill="#303030" />
<rect x="1" y="1" width="1" height="1" fill="#fff" />
<rect x="1" y="14" width="1" height="1" fill="#fff" />
<rect x="3" y="1" width="1" height="1" fill="#fff" />
<rect x="3" y="14" width="1" height="1" fill="#fff" />
<rect x="5" y="1" width="1" height="1" fill="#fff" />
<rect x="5" y="14" width="1" height="1" fill="#fff" />
<rect x="7" y="1" width="1" height="1" fill="#fff" />
<rect x="7" y="14" width="1" height="1" fill="#fff" />
<rect x="9" y="1" width="1" height="1" fill="#fff" />
<rect x="9" y="14" width="1" height="1" fill="#fff" />
<rect x="11" y="1" width="1" height="1" fill="#fff" />
<rect x="11" y="14" width="1" height="1" fill="#fff" />
<rect x="13" y="1" width="1" height="1" fill="#fff" />
<rect x="13" y="14" width="1" height="1" fill="#fff" />
<rect x="1" y="3" width="1" height="1" fill="#d8d8ff" />
<rect x="13" y="3" width="1" height="1" fill="#d8d8ff" />
<rect x="1" y="5" width="1" height="1" fill="#d8d8ff" />
<rect x="13" y="5" width="1" height="1" fill="#d8d8ff" />
<rect x="1" y="7" width="1" height="1" fill="#d8d8ff" />
<rect x="13" y="7" width="1" height="1" fill="#d8d8ff" />
<rect x="1" y="9" width="1" height="1" fill="#d8d8ff" />
<rect x="13" y="9" width="1" height="1" fill="#d8d8ff" />
<rect x="1" y="11" width="1" height="1" fill="#d8d8ff" />
<rect x="13" y="11" width="1" height="1" fill="#d8d8ff" />
<path d="M2.5 2.8 L13.6 8 L2.5 13.200z" fill="#ffff70" stroke="#000" stroke-width="0.7" shape-rendering="geometricPrecision"/>
<path d="M4 8h5.500M6.700 5.300v5.400" fill="none" stroke="#000" stroke-width="1.3" shape-rendering="geometricPrecision"/>
</g>
<text x="336" y="791.5" fill="#000" font-size="11.5" font-weight="bold" textLength="48" lengthAdjust="spacingAndGlyphs" stroke="#000" stroke-width="0.18" >LabVIEW</text>
<rect x="476" y="776" width="159" height="22" fill="#404040" />
<rect x="476" y="776" width="158" height="21" fill="#fff" />
<rect x="477" y="777" width="157" height="20" fill="#808080" />
<rect x="477" y="777" width="156" height="19" fill="#d4d0c8" />
<g transform="translate(481,779) scale(1)">
<rect x="0" y="0" width="15" height="16" fill="#000" />
<rect x="1" y="1" width="13" height="14" fill="#303030" />
<rect x="1" y="1" width="1" height="1" fill="#fff" />
<rect x="1" y="14" width="1" height="1" fill="#fff" />
<rect x="3" y="1" width="1" height="1" fill="#fff" />
<rect x="3" y="14" width="1" height="1" fill="#fff" />
<rect x="5" y="1" width="1" height="1" fill="#fff" />
<rect x="5" y="14" width="1" height="1" fill="#fff" />
<rect x="7" y="1" width="1" height="1" fill="#fff" />
<rect x="7" y="14" width="1" height="1" fill="#fff" />
<rect x="9" y="1" width="1" height="1" fill="#fff" />
<rect x="9" y="14" width="1" height="1" fill="#fff" />
<rect x="11" y="1" width="1" height="1" fill="#fff" />
<rect x="11" y="14" width="1" height="1" fill="#fff" />
<rect x="13" y="1" width="1" height="1" fill="#fff" />
<rect x="13" y="14" width="1" height="1" fill="#fff" />
<rect x="1" y="3" width="1" height="1" fill="#d8d8ff" />
<rect x="13" y="3" width="1" height="1" fill="#d8d8ff" />
<rect x="1" y="5" width="1" height="1" fill="#d8d8ff" />
<rect x="13" y="5" width="1" height="1" fill="#d8d8ff" />
<rect x="1" y="7" width="1" height="1" fill="#d8d8ff" />
<rect x="13" y="7" width="1" height="1" fill="#d8d8ff" />
<rect x="1" y="9" width="1" height="1" fill="#d8d8ff" />
<rect x="13" y="9" width="1" height="1" fill="#d8d8ff" />
<rect x="1" y="11" width="1" height="1" fill="#d8d8ff" />
<rect x="13" y="11" width="1" height="1" fill="#d8d8ff" />
<path d="M2.5 2.8 L13.6 8 L2.5 13.200z" fill="#ffff70" stroke="#000" stroke-width="0.7" shape-rendering="geometricPrecision"/>
<path d="M4 8h5.500M6.700 5.300v5.400" fill="none" stroke="#000" stroke-width="1.3" shape-rendering="geometricPrecision"/>
</g>
<text x="497" y="791" fill="#000" font-size="11" textLength="130.5" lengthAdjust="spacingAndGlyphs" stroke="#000" stroke-width="0.18" >AnalogSchwellwertCOMA...</text>
<rect x="640" y="776" width="157" height="22" fill="#404040" />
<rect x="640" y="776" width="156" height="21" fill="#fff" />
<rect x="641" y="777" width="155" height="20" fill="#808080" />
<rect x="641" y="777" width="154" height="19" fill="#d4d0c8" />
<g transform="translate(645,779) scale(1)">
<rect x="0" y="0" width="15" height="16" fill="#000" />
<rect x="1" y="1" width="13" height="14" fill="#303030" />
<rect x="1" y="1" width="1" height="1" fill="#fff" />
<rect x="1" y="14" width="1" height="1" fill="#fff" />
<rect x="3" y="1" width="1" height="1" fill="#fff" />
<rect x="3" y="14" width="1" height="1" fill="#fff" />
<rect x="5" y="1" width="1" height="1" fill="#fff" />
<rect x="5" y="14" width="1" height="1" fill="#fff" />
<rect x="7" y="1" width="1" height="1" fill="#fff" />
<rect x="7" y="14" width="1" height="1" fill="#fff" />
<rect x="9" y="1" width="1" height="1" fill="#fff" />
<rect x="9" y="14" width="1" height="1" fill="#fff" />
<rect x="11" y="1" width="1" height="1" fill="#fff" />
<rect x="11" y="14" width="1" height="1" fill="#fff" />
<rect x="13" y="1" width="1" height="1" fill="#fff" />
<rect x="13" y="14" width="1" height="1" fill="#fff" />
<rect x="1" y="3" width="1" height="1" fill="#d8d8ff" />
<rect x="13" y="3" width="1" height="1" fill="#d8d8ff" />
<rect x="1" y="5" width="1" height="1" fill="#d8d8ff" />
<rect x="13" y="5" width="1" height="1" fill="#d8d8ff" />
<rect x="1" y="7" width="1" height="1" fill="#d8d8ff" />
<rect x="13" y="7" width="1" height="1" fill="#d8d8ff" />
<rect x="1" y="9" width="1" height="1" fill="#d8d8ff" />
<rect x="13" y="9" width="1" height="1" fill="#d8d8ff" />
<rect x="1" y="11" width="1" height="1" fill="#d8d8ff" />
<rect x="13" y="11" width="1" height="1" fill="#d8d8ff" />
<path d="M2.5 2.8 L13.6 8 L2.5 13.200z" fill="#ffff70" stroke="#000" stroke-width="0.7" shape-rendering="geometricPrecision"/>
<path d="M4 8h5.500M6.700 5.300v5.400" fill="none" stroke="#000" stroke-width="1.3" shape-rendering="geometricPrecision"/>
</g>
<text x="661" y="791" fill="#000" font-size="11" textLength="130.5" lengthAdjust="spacingAndGlyphs" stroke="#000" stroke-width="0.18" >AnalogSchwellwertCOMA...</text>
<rect x="1147" y="776" width="131" height="22" fill="#fff" />
<rect x="1147" y="776" width="130" height="21" fill="#808080" />
<rect x="1148" y="777" width="129" height="20" fill="#d4d0c8" />
<text x="1151.5" y="791" fill="#000" font-size="14" font-weight="bold" stroke="#000" stroke-width="0.18" >«</text>
<g shape-rendering="geometricPrecision">
<path d="M1166 782 h8 v7 h-8z" fill="#3050a0" stroke="#102060" stroke-width="0.8" />
<path d="M1165 790 h10 v2 h-10z" fill="#c0c8e0" stroke="#404060" stroke-width="0.6" />
<path d="M1173 788 l6 6 M1179 788 l-6 6" fill="none" stroke="#e01010" stroke-width="2" />
<path d="M1176 780 q2 3 0 6 M1178.5 779 q2.5 4 0 8" fill="none" stroke="#606060" stroke-width="0.8" />
<path d="M1187 779 h7 l4.5 4.5 v7 l-4.5 4.5 h-7 l-4.5 -4.5 v-7z" fill="#0010e0" />
<path d="M1183 787 h3 l1.5 -3 l1.5 6 l1.5 -6 l1.5 6 l1 -3 h3" fill="none" stroke="#fff" stroke-width="1.1" />
<path d="M1205 780 h5 v10 h-5z" fill="#5090d0" stroke="#204080" stroke-width="0.6" />
<path d="M1201 786 q0 6 4 8 l2 -3 q-3 -2 -3.5 -6z" fill="#f0b848" stroke="#906010" stroke-width="0.5" />
<path d="M1214 786 q0 6 -4 8 l-2 -3 q3 -2 3.5 -6z" fill="#f0b848" stroke="#906010" stroke-width="0.5" />
<circle cx="1223.5" cy="785" r="4.5" fill="#909090" stroke="#505050" stroke-width="0.8"/>
<circle cx="1229" cy="789.5" r="4.2" fill="#fff" stroke="#e02020" stroke-width="1.6"/>
<path d="M1226.3 789.5 h5.4" fill="none" stroke="#e02020" stroke-width="1.6" />
</g>
<text x="1242" y="790.3" fill="#000" font-size="11" textLength="28" lengthAdjust="spacingAndGlyphs" stroke="#000" stroke-width="0.18" >08:00</text>
</svg>
</body></html>
